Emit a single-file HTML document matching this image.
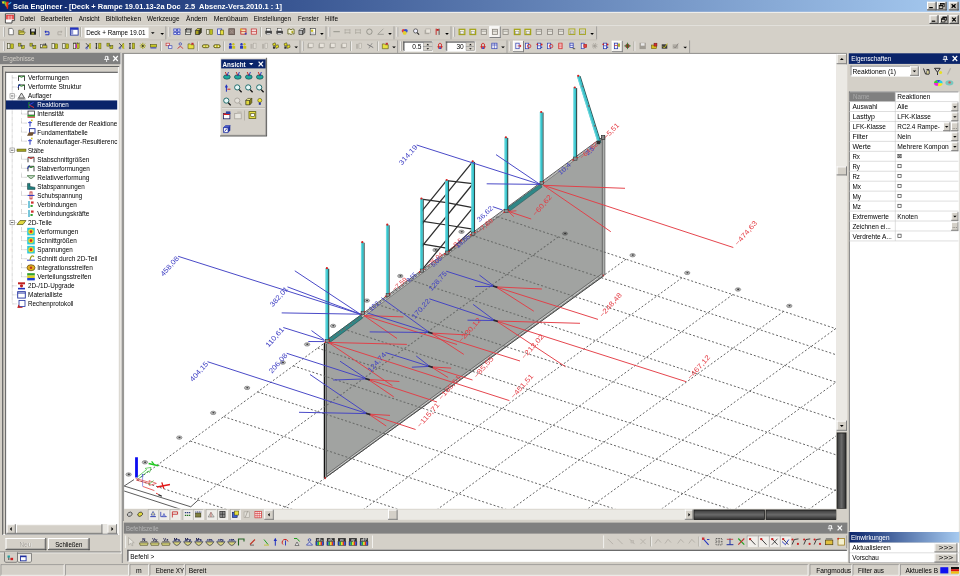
<!DOCTYPE html>
<html lang="de"><head><meta charset="utf-8"><title>Scia Engineer</title>
<style>html,body{margin:0;padding:0;background:#d4d0c8;overflow:hidden}svg{display:block;font-family:"Liberation Sans",sans-serif}text{white-space:pre}</style></head><body>
<svg width="960" height="576" viewBox="0 0 960 576">
<defs><linearGradient id="gt" x1="0" x2="1" y1="0" y2="0"><stop offset="0" stop-color="#0a246a"/><stop offset="1" stop-color="#a6caf0"/></linearGradient><linearGradient id="ge" x1="0" x2="1" y1="0" y2="0"><stop offset="0" stop-color="#0a246a"/><stop offset="1" stop-color="#a6caf0"/></linearGradient><linearGradient id="gd" x1="0" x2="0" y1="0" y2="1"><stop offset="0" stop-color="#3a3a3a"/><stop offset=".5" stop-color="#6a6a6a"/><stop offset="1" stop-color="#2c2c2c"/></linearGradient><linearGradient id="gdv" x1="0" x2="1" y1="0" y2="0"><stop offset="0" stop-color="#3a3a3a"/><stop offset=".5" stop-color="#6a6a6a"/><stop offset="1" stop-color="#2c2c2c"/></linearGradient><filter id="gs" color-interpolation-filters="sRGB" filterUnits="userSpaceOnUse" x="0" y="0" width="960" height="576"><feOffset dx="0" dy="0"/></filter><clipPath id="vp"><rect x="124" y="54" width="712" height="454.5"/></clipPath></defs>
<rect x="0" y="0" width="960" height="576" fill="#d4d0c8"/>
<g filter="url(#gs)">
<rect x="124" y="54" width="712.5" height="455" fill="#fff"/>
<g clip-path="url(#vp)">
<polygon points="325,342 603.4,137 603.6,276 325,478" fill="#a1a3a1"/>
<polygon points="602.3,137.8 604.9,136 604.9,274.4 602.3,276.6" fill="#aeb0ae" stroke="#3a3a3a" stroke-width="0.6"/>
<line x1="325" y1="478" x2="603.6" y2="276" stroke="#2a2a2a" stroke-width="0.9"/>
<line x1="326.5" y1="475.4" x2="602" y2="274.8" stroke="#e4e4e4" stroke-width="0.7"/>
<line x1="326.5" y1="474.4" x2="601.8" y2="273.8" stroke="#4a4a4a" stroke-width="0.6"/>
<line x1="324.4" y1="343" x2="324.4" y2="478" stroke="#111" stroke-width="1.3"/>
<line x1="326.4" y1="343" x2="326.4" y2="476" stroke="#333" stroke-width="0.7"/>
<line x1="325" y1="341.4" x2="603.4" y2="136.4" stroke="#303030" stroke-width="0.8"/>
<line x1="326" y1="343.6" x2="602.4" y2="138.8" stroke="#dcdcdc" stroke-width="0.7"/>
<line x1="326" y1="344.6" x2="602" y2="139.8" stroke="#555" stroke-width="0.5"/>
<polygon points="327.5,339.45 361,314.99 362.5,318.19 328.5,343.45" fill="#2f8787" stroke="#1c4c4c" stroke-width="0.5"/>
<polygon points="507,208.36 540.5,183.9 542,187.1 508,212.36" fill="#2f8787" stroke="#1c4c4c" stroke-width="0.5"/>
<circle cx="325" cy="478.2" r="1" fill="#e02020"/>
<circle cx="603.4" cy="275.4" r="0.9" fill="#c03030"/>
<clipPath id="cw"><polygon points="325,342 603.4,137 603.6,276 325,478"/></clipPath>
<clipPath id="cnw"><path clip-rule="evenodd" d="M0,0 H960 V576 H0 Z M325,342 L603.4,137 L603.6,276 L325,478 Z"/></clipPath>
<g stroke="#5c5c5c" stroke-width="0.95" fill="none" stroke-dasharray="2 2" clip-path="url(#cnw)">
<line x1="137" y1="479.97" x2="836.5" y2="709.41"/>
<line x1="157.5" y1="465" x2="836.5" y2="687.71"/>
<line x1="190.3" y1="441.05" x2="836.5" y2="653"/>
<line x1="223.7" y1="416.66" x2="836.5" y2="617.65"/>
<line x1="257.6" y1="391.9" x2="836.5" y2="581.78"/>
<line x1="293.3" y1="365.83" x2="836.5" y2="544"/>
<line x1="317.6" y1="348.08" x2="836.5" y2="518.28"/>
<line x1="343.6" y1="329.09" x2="836.5" y2="490.76"/>
<line x1="377.4" y1="304.41" x2="836.5" y2="454.99"/>
<line x1="410.8" y1="280.02" x2="836.5" y2="419.65"/>
<line x1="446" y1="254.31" x2="836.5" y2="382.39"/>
<line x1="472" y1="235.32" x2="836.5" y2="354.88"/>
<line x1="497.5" y1="216.7" x2="836.5" y2="328.91"/>
<line x1="497.5" y1="216.7" x2="137" y2="479.97"/>
<line x1="558.3" y1="236.82" x2="196.85" y2="499.6"/>
<line x1="626" y1="259.23" x2="264.74" y2="521.87"/>
<line x1="682" y1="277.77" x2="320.9" y2="540.29"/>
<line x1="732.8" y1="294.58" x2="371.84" y2="557"/>
<line x1="783.6" y1="311.4" x2="422.79" y2="573.71"/>
<line x1="835.7" y1="328.64" x2="475.03" y2="590.85"/>
<line x1="886.5" y1="345.46" x2="525.98" y2="607.56"/>
<line x1="937.3" y1="362.27" x2="576.92" y2="624.27"/>
<line x1="988.1" y1="379.09" x2="627.87" y2="640.98"/>
<line x1="1039" y1="395.94" x2="678.91" y2="657.72"/>
</g>
<g stroke="#6a6c6a" stroke-width="1.05" fill="none" stroke-dasharray="2 2" clip-path="url(#cw)">
<line x1="137" y1="479.97" x2="836.5" y2="709.41"/>
<line x1="157.5" y1="465" x2="836.5" y2="687.71"/>
<line x1="190.3" y1="441.05" x2="836.5" y2="653"/>
<line x1="223.7" y1="416.66" x2="836.5" y2="617.65"/>
<line x1="257.6" y1="391.9" x2="836.5" y2="581.78"/>
<line x1="293.3" y1="365.83" x2="836.5" y2="544"/>
<line x1="317.6" y1="348.08" x2="836.5" y2="518.28"/>
<line x1="343.6" y1="329.09" x2="836.5" y2="490.76"/>
<line x1="377.4" y1="304.41" x2="836.5" y2="454.99"/>
<line x1="410.8" y1="280.02" x2="836.5" y2="419.65"/>
<line x1="446" y1="254.31" x2="836.5" y2="382.39"/>
<line x1="472" y1="235.32" x2="836.5" y2="354.88"/>
<line x1="497.5" y1="216.7" x2="836.5" y2="328.91"/>
<line x1="497.5" y1="216.7" x2="137" y2="479.97"/>
<line x1="558.3" y1="236.82" x2="196.85" y2="499.6"/>
<line x1="626" y1="259.23" x2="264.74" y2="521.87"/>
<line x1="682" y1="277.77" x2="320.9" y2="540.29"/>
<line x1="732.8" y1="294.58" x2="371.84" y2="557"/>
<line x1="783.6" y1="311.4" x2="422.79" y2="573.71"/>
<line x1="835.7" y1="328.64" x2="475.03" y2="590.85"/>
<line x1="886.5" y1="345.46" x2="525.98" y2="607.56"/>
<line x1="937.3" y1="362.27" x2="576.92" y2="624.27"/>
<line x1="988.1" y1="379.09" x2="627.87" y2="640.98"/>
<line x1="1039" y1="395.94" x2="678.91" y2="657.72"/>
</g>
<ellipse cx="128.6" cy="474.5" rx="2.7" ry="1.7" fill="#c4c4c4" stroke="#5a5a5a" stroke-width=".55"/>
<ellipse cx="128.8" cy="474.4" rx="1.1" ry=".8" fill="#3a3a3a"/>
<ellipse cx="144.9" cy="462.3" rx="2.7" ry="1.7" fill="#c4c4c4" stroke="#5a5a5a" stroke-width=".55"/>
<ellipse cx="145.1" cy="462.2" rx="1.1" ry=".8" fill="#3a3a3a"/>
<ellipse cx="179.3" cy="437.6" rx="2.7" ry="1.7" fill="#c4c4c4" stroke="#5a5a5a" stroke-width=".55"/>
<ellipse cx="179.5" cy="437.5" rx="1.1" ry=".8" fill="#3a3a3a"/>
<ellipse cx="213.2" cy="412.9" rx="2.7" ry="1.7" fill="#c4c4c4" stroke="#5a5a5a" stroke-width=".55"/>
<ellipse cx="213.4" cy="412.8" rx="1.1" ry=".8" fill="#3a3a3a"/>
<ellipse cx="247.1" cy="387.9" rx="2.7" ry="1.7" fill="#c4c4c4" stroke="#5a5a5a" stroke-width=".55"/>
<ellipse cx="247.3" cy="387.8" rx="1.1" ry=".8" fill="#3a3a3a"/>
<ellipse cx="282.8" cy="362.6" rx="2.7" ry="1.7" fill="#c4c4c4" stroke="#5a5a5a" stroke-width=".55"/>
<ellipse cx="283" cy="362.5" rx="1.1" ry=".8" fill="#3a3a3a"/>
<ellipse cx="307.1" cy="344.4" rx="2.7" ry="1.7" fill="#c4c4c4" stroke="#5a5a5a" stroke-width=".55"/>
<ellipse cx="307.3" cy="344.3" rx="1.1" ry=".8" fill="#3a3a3a"/>
<ellipse cx="333.1" cy="325.9" rx="2.7" ry="1.7" fill="#c4c4c4" stroke="#5a5a5a" stroke-width=".55"/>
<ellipse cx="333.3" cy="325.8" rx="1.1" ry=".8" fill="#3a3a3a"/>
<ellipse cx="366.9" cy="300.6" rx="2.7" ry="1.7" fill="#c4c4c4" stroke="#5a5a5a" stroke-width=".55"/>
<ellipse cx="367.1" cy="300.5" rx="1.1" ry=".8" fill="#3a3a3a"/>
<ellipse cx="400.3" cy="276" rx="2.7" ry="1.7" fill="#c4c4c4" stroke="#5a5a5a" stroke-width=".55"/>
<ellipse cx="400.5" cy="275.9" rx="1.1" ry=".8" fill="#3a3a3a"/>
<ellipse cx="435.5" cy="250" rx="2.7" ry="1.7" fill="#c4c4c4" stroke="#5a5a5a" stroke-width=".55"/>
<ellipse cx="435.7" cy="249.9" rx="1.1" ry=".8" fill="#3a3a3a"/>
<ellipse cx="461.5" cy="231.8" rx="2.7" ry="1.7" fill="#c4c4c4" stroke="#5a5a5a" stroke-width=".55"/>
<ellipse cx="461.7" cy="231.7" rx="1.1" ry=".8" fill="#3a3a3a"/>
<ellipse cx="565" cy="233.6" rx="2.6" ry="1.6" fill="#7c7e7c" stroke="#505050" stroke-width=".5"/>
<ellipse cx="565.2" cy="233.5" rx="1.2" ry=".8" fill="#333"/>
<ellipse cx="632.6" cy="255.2" rx="2.7" ry="1.7" fill="#c4c4c4" stroke="#5a5a5a" stroke-width=".55"/>
<ellipse cx="632.8" cy="255.1" rx="1.1" ry=".8" fill="#3a3a3a"/>
<ellipse cx="687.2" cy="272.9" rx="2.7" ry="1.7" fill="#c4c4c4" stroke="#5a5a5a" stroke-width=".55"/>
<ellipse cx="687.4" cy="272.8" rx="1.1" ry=".8" fill="#3a3a3a"/>
<ellipse cx="738" cy="289.5" rx="2.7" ry="1.7" fill="#c4c4c4" stroke="#5a5a5a" stroke-width=".55"/>
<ellipse cx="738.2" cy="289.4" rx="1.1" ry=".8" fill="#3a3a3a"/>
<ellipse cx="789.3" cy="305.9" rx="2.7" ry="1.7" fill="#c4c4c4" stroke="#5a5a5a" stroke-width=".55"/>
<ellipse cx="789.5" cy="305.8" rx="1.1" ry=".8" fill="#3a3a3a"/>
<polyline points="446.7,180.6 472.7,183.6" fill="none" stroke="#2c2c2c" stroke-width="1.25"/>
<polyline points="421.4,199.2 446.7,202.6 472.7,207.6" fill="none" stroke="#2c2c2c" stroke-width="1.25"/>
<polyline points="421.4,221.2 446.7,225 472.7,229.2" fill="none" stroke="#2c2c2c" stroke-width="1.25"/>
<polyline points="421.4,243.8 446.7,248.2" fill="none" stroke="#2c2c2c" stroke-width="1.25"/>
<line x1="472.7" y1="161.6" x2="421.4" y2="224.6" stroke="#2c2c2c" stroke-width="1.25"/>
<line x1="472.7" y1="184" x2="421.4" y2="247.2" stroke="#2c2c2c" stroke-width="1.25"/>
<line x1="472.7" y1="207.8" x2="421.4" y2="270.6" stroke="#2c2c2c" stroke-width="1.25"/>
<line x1="446.7" y1="180.4" x2="421.4" y2="211.6" stroke="#2c2c2c" stroke-width="1.25"/>
<line x1="472.7" y1="229.4" x2="446.7" y2="253.4" stroke="#2c2c2c" stroke-width="1.25"/>
<line x1="328.6" y1="268.8" x2="328.6" y2="342" stroke="#33403f" stroke-width="1.3"/>
<line x1="326.9" y1="268.2" x2="326.9" y2="342" stroke="#36c4cc" stroke-width="2.7"/>
<line x1="326.1" y1="268.2" x2="326.1" y2="342" stroke="#7fe4e8" stroke-width="0.7"/>
<circle cx="326.9" cy="268.2" r="1.1" fill="#d82020"/>
<rect x="325.7" y="339.4" width="3.4" height="3.2" fill="#8c9090" stroke="#2a2a2a" stroke-width="0.5"/>
<circle cx="325.1" cy="342.3" r="0.8" fill="#d82020"/>
<circle cx="329.3" cy="339.8" r="0.7" fill="#d82020"/>
<line x1="364" y1="242.8" x2="364" y2="313.8" stroke="#33403f" stroke-width="1.3"/>
<line x1="362.3" y1="242.2" x2="362.3" y2="313.8" stroke="#36c4cc" stroke-width="2.7"/>
<line x1="361.5" y1="242.2" x2="361.5" y2="313.8" stroke="#7fe4e8" stroke-width="0.7"/>
<circle cx="362.3" cy="242.2" r="1.1" fill="#d82020"/>
<rect x="361.1" y="311.2" width="3.4" height="3.2" fill="#8c9090" stroke="#2a2a2a" stroke-width="0.5"/>
<circle cx="360.5" cy="314.1" r="0.8" fill="#d82020"/>
<circle cx="364.7" cy="311.6" r="0.7" fill="#d82020"/>
<line x1="389" y1="225.3" x2="389" y2="296" stroke="#33403f" stroke-width="1.3"/>
<line x1="387.3" y1="224.7" x2="387.3" y2="296" stroke="#36c4cc" stroke-width="2.7"/>
<line x1="386.5" y1="224.7" x2="386.5" y2="296" stroke="#7fe4e8" stroke-width="0.7"/>
<circle cx="387.3" cy="224.7" r="1.1" fill="#d82020"/>
<rect x="386.1" y="293.4" width="3.4" height="3.2" fill="#8c9090" stroke="#2a2a2a" stroke-width="0.5"/>
<circle cx="385.5" cy="296.3" r="0.8" fill="#d82020"/>
<circle cx="389.7" cy="293.8" r="0.7" fill="#d82020"/>
<line x1="423.1" y1="199.2" x2="423.1" y2="271.6" stroke="#33403f" stroke-width="1.3"/>
<line x1="421.4" y1="198.6" x2="421.4" y2="271.6" stroke="#36c4cc" stroke-width="2.7"/>
<line x1="420.6" y1="198.6" x2="420.6" y2="271.6" stroke="#7fe4e8" stroke-width="0.7"/>
<circle cx="421.4" cy="198.6" r="1.1" fill="#d82020"/>
<rect x="420.2" y="269" width="3.4" height="3.2" fill="#8c9090" stroke="#2a2a2a" stroke-width="0.5"/>
<circle cx="419.6" cy="271.9" r="0.8" fill="#d82020"/>
<circle cx="423.8" cy="269.4" r="0.7" fill="#d82020"/>
<line x1="448.4" y1="180.6" x2="448.4" y2="253.6" stroke="#33403f" stroke-width="1.3"/>
<line x1="446.7" y1="180" x2="446.7" y2="253.6" stroke="#36c4cc" stroke-width="2.7"/>
<line x1="445.9" y1="180" x2="445.9" y2="253.6" stroke="#7fe4e8" stroke-width="0.7"/>
<circle cx="446.7" cy="180" r="1.1" fill="#d82020"/>
<rect x="445.5" y="251" width="3.4" height="3.2" fill="#8c9090" stroke="#2a2a2a" stroke-width="0.5"/>
<circle cx="444.9" cy="253.9" r="0.8" fill="#d82020"/>
<circle cx="449.1" cy="251.4" r="0.7" fill="#d82020"/>
<line x1="474.4" y1="161.9" x2="474.4" y2="234.6" stroke="#33403f" stroke-width="1.3"/>
<line x1="472.7" y1="161.3" x2="472.7" y2="234.6" stroke="#36c4cc" stroke-width="2.7"/>
<line x1="471.9" y1="161.3" x2="471.9" y2="234.6" stroke="#7fe4e8" stroke-width="0.7"/>
<circle cx="472.7" cy="161.3" r="1.1" fill="#d82020"/>
<rect x="471.5" y="232" width="3.4" height="3.2" fill="#8c9090" stroke="#2a2a2a" stroke-width="0.5"/>
<circle cx="470.9" cy="234.9" r="0.8" fill="#d82020"/>
<circle cx="475.1" cy="232.4" r="0.7" fill="#d82020"/>
<line x1="507.6" y1="137.9" x2="507.6" y2="212" stroke="#33403f" stroke-width="1.3"/>
<line x1="505.9" y1="137.3" x2="505.9" y2="212" stroke="#36c4cc" stroke-width="2.7"/>
<line x1="505.1" y1="137.3" x2="505.1" y2="212" stroke="#7fe4e8" stroke-width="0.7"/>
<circle cx="505.9" cy="137.3" r="1.1" fill="#d82020"/>
<rect x="504.7" y="209.4" width="3.4" height="3.2" fill="#8c9090" stroke="#2a2a2a" stroke-width="0.5"/>
<circle cx="504.1" cy="212.3" r="0.8" fill="#d82020"/>
<circle cx="508.3" cy="209.8" r="0.7" fill="#d82020"/>
<line x1="542.9" y1="112.6" x2="542.9" y2="184" stroke="#33403f" stroke-width="1.3"/>
<line x1="541.2" y1="112" x2="541.2" y2="184" stroke="#36c4cc" stroke-width="2.7"/>
<line x1="540.4" y1="112" x2="540.4" y2="184" stroke="#7fe4e8" stroke-width="0.7"/>
<circle cx="541.2" cy="112" r="1.1" fill="#d82020"/>
<rect x="540" y="181.4" width="3.4" height="3.2" fill="#8c9090" stroke="#2a2a2a" stroke-width="0.5"/>
<circle cx="539.4" cy="184.3" r="0.8" fill="#d82020"/>
<circle cx="543.6" cy="181.8" r="0.7" fill="#d82020"/>
<line x1="576.5" y1="88.1" x2="576.5" y2="159.6" stroke="#33403f" stroke-width="1.3"/>
<line x1="574.8" y1="87.5" x2="574.8" y2="159.6" stroke="#36c4cc" stroke-width="2.7"/>
<line x1="574" y1="87.5" x2="574" y2="159.6" stroke="#7fe4e8" stroke-width="0.7"/>
<circle cx="574.8" cy="87.5" r="1.1" fill="#d82020"/>
<rect x="573.6" y="157" width="3.4" height="3.2" fill="#8c9090" stroke="#2a2a2a" stroke-width="0.5"/>
<circle cx="573" cy="159.9" r="0.8" fill="#d82020"/>
<circle cx="577.2" cy="157.4" r="0.7" fill="#d82020"/>
<line x1="580" y1="76.2" x2="600.8" y2="142.8" stroke="#2a5050" stroke-width="1.2"/>
<line x1="578.3" y1="76" x2="599.1" y2="142.6" stroke="#38c0c8" stroke-width="2.8"/>
<line x1="577.5" y1="76.4" x2="598.3" y2="143" stroke="#7fe0e4" stroke-width="0.7"/>
<circle cx="578.2" cy="75.8" r="1.1" fill="#d82020"/>
<circle cx="582.22" cy="85.99" r="0.6" fill="#c02828"/>
<circle cx="588.46" cy="105.97" r="0.6" fill="#c02828"/>
<circle cx="594.7" cy="125.95" r="0.6" fill="#c02828"/>
<rect x="596.6" y="140.6" width="3.6" height="3.6" fill="#333"/>
<rect x="601.4" y="135.4" width="3.4" height="4" fill="#8a8a8a" stroke="#222" stroke-width="0.6"/>
<line x1="283.3" y1="327.5" x2="324.5" y2="340.4" stroke="#4040c4" stroke-width="0.95"/>
<line x1="311.5" y1="330.6" x2="324.5" y2="340" stroke="#4040c4" stroke-width="0.95"/>
<line x1="308.3" y1="341.5" x2="324.5" y2="341.6" stroke="#4040c4" stroke-width="0.95"/>
<text x="284.5" y="329.9" font-size="7" fill="#4040c4" textLength="24" lengthAdjust="spacingAndGlyphs" text-anchor="end" transform="rotate(-48.5 284.5 329.9)">110,61</text>
<line x1="328.4" y1="342.4" x2="406.9" y2="344.4" stroke="#e43c44" stroke-width="0.95"/>
<line x1="328.4" y1="342.4" x2="509.4" y2="400.6" stroke="#e43c44" stroke-width="0.95"/>
<line x1="328.4" y1="342.4" x2="392.5" y2="385.8" stroke="#e43c44" stroke-width="0.95"/>
<text x="513.8" y="399" font-size="7" fill="#e43c44" textLength="30.1" lengthAdjust="spacingAndGlyphs" transform="rotate(-48.5 513.8 399)">−451,51</text>
<line x1="178.1" y1="256.3" x2="360.4" y2="314.2" stroke="#4040c4" stroke-width="0.95"/>
<line x1="287.5" y1="286.9" x2="360.4" y2="314.2" stroke="#4040c4" stroke-width="0.95"/>
<line x1="294.8" y1="270.8" x2="360.4" y2="314.2" stroke="#4040c4" stroke-width="0.95"/>
<line x1="281.7" y1="312.9" x2="360.4" y2="314.2" stroke="#4040c4" stroke-width="0.95"/>
<text x="179.3" y="258.7" font-size="7" fill="#4040c4" textLength="24" lengthAdjust="spacingAndGlyphs" text-anchor="end" transform="rotate(-48.5 179.3 258.7)">458,08</text>
<text x="288.7" y="289.3" font-size="7" fill="#4040c4" textLength="24" lengthAdjust="spacingAndGlyphs" text-anchor="end" transform="rotate(-48.5 288.7 289.3)">382,01</text>
<line x1="364" y1="315.6" x2="403.4" y2="316.9" stroke="#e43c44" stroke-width="0.95"/>
<line x1="364" y1="315.6" x2="457" y2="344.5" stroke="#e43c44" stroke-width="0.95"/>
<line x1="364" y1="315.6" x2="397" y2="338.5" stroke="#e43c44" stroke-width="0.95"/>
<text x="461.4" y="342.9" font-size="7" fill="#e43c44" textLength="30.1" lengthAdjust="spacingAndGlyphs" transform="rotate(-48.5 461.4 342.9)">−230,12</text>
<line x1="416.7" y1="145" x2="540" y2="184.4" stroke="#4040c4" stroke-width="0.95"/>
<line x1="496" y1="154.6" x2="540" y2="184.4" stroke="#4040c4" stroke-width="0.95"/>
<line x1="486.7" y1="183.8" x2="540" y2="184.4" stroke="#4040c4" stroke-width="0.95"/>
<text x="417.9" y="147.4" font-size="7" fill="#4040c4" textLength="24" lengthAdjust="spacingAndGlyphs" text-anchor="end" transform="rotate(-48.5 417.9 147.4)">314,19</text>
<line x1="543.4" y1="185.3" x2="625" y2="188.3" stroke="#e43c44" stroke-width="0.95"/>
<line x1="543.4" y1="185.3" x2="733.3" y2="247.5" stroke="#e43c44" stroke-width="0.95"/>
<line x1="543.4" y1="185.3" x2="610.8" y2="231.7" stroke="#e43c44" stroke-width="0.95"/>
<text x="737.7" y="245.9" font-size="7" fill="#e43c44" textLength="30.1" lengthAdjust="spacingAndGlyphs" transform="rotate(-48.5 737.7 245.9)">−474,63</text>
<line x1="286.7" y1="353.3" x2="366.6" y2="378.9" stroke="#4040c4" stroke-width="0.95"/>
<line x1="340" y1="361.2" x2="366.6" y2="378.9" stroke="#4040c4" stroke-width="0.95"/>
<line x1="333.1" y1="380" x2="366.6" y2="378.9" stroke="#4040c4" stroke-width="0.95"/>
<text x="287.9" y="355.7" font-size="7" fill="#4040c4" textLength="24" lengthAdjust="spacingAndGlyphs" text-anchor="end" transform="rotate(-48.5 287.9 355.7)">206,08</text>
<line x1="368.1" y1="379.4" x2="399.4" y2="381.5" stroke="#e43c44" stroke-width="0.95"/>
<line x1="368.1" y1="379.4" x2="437" y2="402" stroke="#e43c44" stroke-width="0.95"/>
<line x1="368.1" y1="379.4" x2="393.8" y2="396.9" stroke="#e43c44" stroke-width="0.95"/>
<text x="441.4" y="400.4" font-size="7" fill="#e43c44" textLength="30.1" lengthAdjust="spacingAndGlyphs" transform="rotate(-48.5 441.4 400.4)">−165,51</text>
<line x1="365.3" y1="378.5" x2="369.7" y2="379.9" stroke="#262630" stroke-width="1.7"/>
<line x1="207.5" y1="361.7" x2="367.2" y2="413.6" stroke="#4040c4" stroke-width="0.95"/>
<line x1="310" y1="374.5" x2="367.2" y2="413.6" stroke="#4040c4" stroke-width="0.95"/>
<line x1="299" y1="412.3" x2="367.2" y2="413.6" stroke="#4040c4" stroke-width="0.95"/>
<text x="208.7" y="364.1" font-size="7" fill="#4040c4" textLength="24" lengthAdjust="spacingAndGlyphs" text-anchor="end" transform="rotate(-48.5 208.7 364.1)">404,15</text>
<line x1="368.7" y1="414.1" x2="390" y2="415.4" stroke="#e43c44" stroke-width="0.95"/>
<line x1="368.7" y1="414.1" x2="415.6" y2="429.5" stroke="#e43c44" stroke-width="0.95"/>
<line x1="368.7" y1="414.1" x2="386.2" y2="426" stroke="#e43c44" stroke-width="0.95"/>
<text x="420" y="427.9" font-size="7" fill="#e43c44" textLength="30.1" lengthAdjust="spacingAndGlyphs" transform="rotate(-48.5 420 427.9)">−115,71</text>
<line x1="365.9" y1="413.2" x2="370.3" y2="414.6" stroke="#262630" stroke-width="1.7"/>
<line x1="367.8" y1="313.1" x2="429.5" y2="332.5" stroke="#4040c4" stroke-width="0.95"/>
<line x1="381.4" y1="297.7" x2="429.5" y2="332.5" stroke="#4040c4" stroke-width="0.95"/>
<line x1="369.7" y1="331.9" x2="429.5" y2="332.5" stroke="#4040c4" stroke-width="0.95"/>
<line x1="431" y1="333" x2="468" y2="335" stroke="#e43c44" stroke-width="0.95"/>
<line x1="431" y1="333" x2="520" y2="361" stroke="#e43c44" stroke-width="0.95"/>
<line x1="431" y1="333" x2="463.8" y2="354.4" stroke="#e43c44" stroke-width="0.95"/>
<text x="524.4" y="359.4" font-size="7" fill="#e43c44" textLength="30.1" lengthAdjust="spacingAndGlyphs" transform="rotate(-48.5 524.4 359.4)">−213,02</text>
<line x1="428.2" y1="332.1" x2="432.6" y2="333.5" stroke="#262630" stroke-width="1.7"/>
<line x1="385.4" y1="352.5" x2="429.7" y2="366.4" stroke="#4040c4" stroke-width="0.95"/>
<line x1="416.2" y1="356" x2="429.7" y2="366.4" stroke="#4040c4" stroke-width="0.95"/>
<line x1="411.9" y1="367.2" x2="429.7" y2="366.4" stroke="#4040c4" stroke-width="0.95"/>
<text x="386.6" y="354.9" font-size="7" fill="#4040c4" textLength="24" lengthAdjust="spacingAndGlyphs" text-anchor="end" transform="rotate(-48.5 386.6 354.9)">124,74</text>
<line x1="431.2" y1="366.9" x2="451.2" y2="368.1" stroke="#e43c44" stroke-width="0.95"/>
<line x1="431.2" y1="366.9" x2="472.5" y2="380" stroke="#e43c44" stroke-width="0.95"/>
<line x1="431.2" y1="366.9" x2="448.1" y2="377.5" stroke="#e43c44" stroke-width="0.95"/>
<text x="476.9" y="378.4" font-size="7" fill="#e43c44" textLength="25.8" lengthAdjust="spacingAndGlyphs" transform="rotate(-48.5 476.9 378.4)">−85,55</text>
<line x1="428.4" y1="366" x2="432.8" y2="367.4" stroke="#262630" stroke-width="1.7"/>
<line x1="446.2" y1="271.2" x2="494.3" y2="286.4" stroke="#4040c4" stroke-width="0.95"/>
<line x1="479.4" y1="275" x2="494.3" y2="286.4" stroke="#4040c4" stroke-width="0.95"/>
<line x1="475" y1="286.5" x2="494.3" y2="286.4" stroke="#4040c4" stroke-width="0.95"/>
<text x="447.4" y="273.6" font-size="7" fill="#4040c4" textLength="24" lengthAdjust="spacingAndGlyphs" text-anchor="end" transform="rotate(-48.5 447.4 273.6)">128,75</text>
<line x1="495.8" y1="286.9" x2="541.9" y2="289" stroke="#e43c44" stroke-width="0.95"/>
<line x1="495.8" y1="286.9" x2="598" y2="319.4" stroke="#e43c44" stroke-width="0.95"/>
<line x1="495.8" y1="286.9" x2="533.8" y2="311.2" stroke="#e43c44" stroke-width="0.95"/>
<text x="602.4" y="317.8" font-size="7" fill="#e43c44" textLength="30.1" lengthAdjust="spacingAndGlyphs" transform="rotate(-48.5 602.4 317.8)">−248,48</text>
<line x1="493" y1="286" x2="497.4" y2="287.4" stroke="#262630" stroke-width="1.7"/>
<line x1="429.4" y1="298.8" x2="494.8" y2="320.5" stroke="#4040c4" stroke-width="0.95"/>
<line x1="473.1" y1="304.4" x2="494.8" y2="320.5" stroke="#4040c4" stroke-width="0.95"/>
<line x1="467.5" y1="320.2" x2="494.8" y2="320.5" stroke="#4040c4" stroke-width="0.95"/>
<text x="430.6" y="301.2" font-size="7" fill="#4040c4" textLength="24" lengthAdjust="spacingAndGlyphs" text-anchor="end" transform="rotate(-48.5 430.6 301.2)">170,22</text>
<line x1="496.3" y1="321" x2="580" y2="323.3" stroke="#e43c44" stroke-width="0.95"/>
<line x1="496.3" y1="321" x2="686.2" y2="381.7" stroke="#e43c44" stroke-width="0.95"/>
<line x1="496.3" y1="321" x2="565.4" y2="366.7" stroke="#e43c44" stroke-width="0.95"/>
<text x="690.6" y="380.1" font-size="7" fill="#e43c44" textLength="30.1" lengthAdjust="spacingAndGlyphs" transform="rotate(-48.5 690.6 380.1)">−467,12</text>
<line x1="493.5" y1="320.1" x2="497.9" y2="321.5" stroke="#262630" stroke-width="1.7"/>
<text x="371.2" y="311.6" font-size="6.6" fill="#4040c4" textLength="13.5" lengthAdjust="spacingAndGlyphs" transform="rotate(-42 371.2 311.6)">102,</text>
<text x="394.8" y="291.6" font-size="6.6" fill="#e43c44" textLength="17" lengthAdjust="spacingAndGlyphs" transform="rotate(-42 394.8 291.6)">−7,59</text>
<text x="409" y="282.8" font-size="6.6" fill="#4040c4" textLength="11" lengthAdjust="spacingAndGlyphs" transform="rotate(-42 409 282.8)">9,55</text>
<text x="428.6" y="268.6" font-size="6.6" fill="#e43c44" textLength="20" lengthAdjust="spacingAndGlyphs" transform="rotate(-42 428.6 268.6)">−75,04</text>
<text x="433.5" y="267.2" font-size="6.6" fill="#4040c4" textLength="12" lengthAdjust="spacingAndGlyphs" transform="rotate(-42 433.5 267.2)">5,05</text>
<text x="452.6" y="250.2" font-size="6.6" fill="#e43c44" textLength="14" lengthAdjust="spacingAndGlyphs" transform="rotate(-42 452.6 250.2)">−9,5</text>
<text x="458" y="248.6" font-size="6.6" fill="#4040c4" textLength="17" lengthAdjust="spacingAndGlyphs" transform="rotate(-42 458 248.6)">15,55</text>
<text x="479.4" y="233.8" font-size="6.6" fill="#e43c44" textLength="19" lengthAdjust="spacingAndGlyphs" transform="rotate(-42 479.4 233.8)">−7,69</text>
<line x1="492.8" y1="206.7" x2="502.4" y2="210" stroke="#4040c4" stroke-width="0.95"/>
<text x="493.6" y="208.8" font-size="6.8" fill="#4040c4" textLength="19.5" lengthAdjust="spacingAndGlyphs" text-anchor="end" transform="rotate(-44 493.6 208.8)">36,62</text>
<line x1="508.4" y1="211.4" x2="531.2" y2="219" stroke="#e43c44" stroke-width="0.95"/>
<line x1="508.4" y1="211.4" x2="516.4" y2="210.8" stroke="#e43c44" stroke-width="0.95"/>
<line x1="508.4" y1="211.4" x2="513.8" y2="216.6" stroke="#e43c44" stroke-width="0.95"/>
<text x="535.6" y="216.6" font-size="7" fill="#e43c44" textLength="25.5" lengthAdjust="spacingAndGlyphs" transform="rotate(-49 535.6 216.6)">−60,62</text>
<text x="560.6" y="175.2" font-size="6.6" fill="#4040c4" textLength="14.5" lengthAdjust="spacingAndGlyphs" transform="rotate(-42 560.6 175.2)">10,4</text>
<text x="582.2" y="159.6" font-size="6.6" fill="#e43c44" textLength="22" lengthAdjust="spacingAndGlyphs" transform="rotate(-42 582.2 159.6)">−64,62</text>
<text x="588" y="155.4" font-size="6.6" fill="#4040c4" textLength="9" lengthAdjust="spacingAndGlyphs" transform="rotate(-42 588 155.4)">2,5</text>
<text x="606.4" y="139.4" font-size="7" fill="#e43c44" textLength="19" lengthAdjust="spacingAndGlyphs" transform="rotate(-46 606.4 139.4)">−5,51</text>
<line x1="124.2" y1="486" x2="190.8" y2="506.8" stroke="#333" stroke-width="0.8"/>
<line x1="124.2" y1="491" x2="184" y2="510.4" stroke="#333" stroke-width="0.8"/>
<line x1="190.8" y1="506.8" x2="198.2" y2="500" stroke="#333" stroke-width="0.8"/>
<line x1="124.2" y1="486" x2="134" y2="479.6" stroke="#333" stroke-width="0.8"/>
<line x1="136.5" y1="457.2" x2="136.5" y2="477.6" stroke="#0c0cf0" stroke-width="2.8"/>
<polyline points="137.4,477 146.6,469.6 145.2,468.4 151,467.4 149.6,472.4 148.2,471 139,478.4" fill="none" stroke="#30c030" stroke-width="0.7"/>
<line x1="148.6" y1="463.4" x2="158.4" y2="465.8" stroke="#20c820" stroke-width="1.5"/>
<line x1="151.6" y1="461.4" x2="154.4" y2="464.8" stroke="#20c820" stroke-width="1.3"/>
<line x1="142.6" y1="474" x2="142.6" y2="486.6" stroke="#8080e0" stroke-width="0.8"/>
<text x="141.6" y="476.6" font-size="4.5" fill="#4040d0">z</text>
<polyline points="135.6,478.4 149.6,482.4 149,480.6 156.4,483.4 149.4,485.4 149.6,483.8 136,480" fill="none" stroke="#e04040" stroke-width="0.7"/>
<line x1="148.4" y1="484.6" x2="153.6" y2="480.6" stroke="#30c030" stroke-width="0.7"/>
<line x1="143" y1="486.5" x2="154.4" y2="490.6" stroke="#e04040" stroke-width="0.8"/>
<line x1="157" y1="487" x2="170" y2="484.4" stroke="#e01818" stroke-width="1.5"/>
<line x1="161.8" y1="482.4" x2="163.8" y2="488.6" stroke="#e01818" stroke-width="1.3"/>
<line x1="156" y1="493.2" x2="158.6" y2="494.4" stroke="#e04040" stroke-width="1"/>
<line x1="158.4" y1="494.6" x2="161.8" y2="496.2" stroke="#222" stroke-width="1.2"/>
</g>
<rect x="0" y="0" width="960" height="12" fill="url(#gt)"/>
<polygon points="1.7,1.4 4.4,1.2 5,3.6 2.6,3.8" fill="#e8d820"/>
<polygon points="3.8,1.3 6.2,1.6 6.6,6 5,5.4" fill="#40c040"/>
<polygon points="5.2,2.6 7,2.6 7.4,7.6 5.8,6.6" fill="#f0a010"/>
<polygon points="6.4,1.8 8.8,1.8 8,9 6.6,8.6" fill="#e02818"/>
<polygon points="8.2,3.6 11.2,1.8 11.3,3 8.4,5" fill="#40b0f0"/>
<text x="13" y="8.9" font-size="7.5" fill="#fff" textLength="269" lengthAdjust="spacingAndGlyphs" font-weight="bold">Scia Engineer - [Deck + Rampe 19.01.13-2a Doc  2.5  Absenz-Vers.2010.1 : 1]</text>
<rect x="927" y="1.8" width="9.6" height="8.6" fill="#d4d0c8"/>
<line x1="927" y1="2.3" x2="936.6" y2="2.3" stroke="#ffffff" stroke-width="1"/>
<line x1="927.5" y1="1.8" x2="927.5" y2="10.4" stroke="#ffffff" stroke-width="1"/>
<line x1="927" y1="9.9" x2="936.6" y2="9.9" stroke="#404040" stroke-width="1"/>
<line x1="936.1" y1="1.8" x2="936.1" y2="10.4" stroke="#404040" stroke-width="1"/>
<line x1="928" y1="9.1" x2="935.6" y2="9.1" stroke="#808080" stroke-width="0.7"/>
<line x1="935.3" y1="2.8" x2="935.3" y2="9.4" stroke="#808080" stroke-width="0.7"/>
<rect x="929.2" y="7" width="3.6" height="1.2" fill="#000"/>
<rect x="937" y="1.8" width="9.6" height="8.6" fill="#d4d0c8"/>
<line x1="937" y1="2.3" x2="946.6" y2="2.3" stroke="#ffffff" stroke-width="1"/>
<line x1="937.5" y1="1.8" x2="937.5" y2="10.4" stroke="#ffffff" stroke-width="1"/>
<line x1="937" y1="9.9" x2="946.6" y2="9.9" stroke="#404040" stroke-width="1"/>
<line x1="946.1" y1="1.8" x2="946.1" y2="10.4" stroke="#404040" stroke-width="1"/>
<line x1="938" y1="9.1" x2="945.6" y2="9.1" stroke="#808080" stroke-width="0.7"/>
<line x1="945.3" y1="2.8" x2="945.3" y2="9.4" stroke="#808080" stroke-width="0.7"/>
<rect x="940.6" y="3.6" width="3.6" height="3.2" fill="none" stroke="#000" stroke-width="0.7"/>
<line x1="940.6" y1="4" x2="944.2" y2="4" stroke="#000" stroke-width="1"/>
<rect x="939.2" y="5.4" width="3.6" height="3.2" fill="#d4d0c8" stroke="#000" stroke-width="0.7"/>
<line x1="939.2" y1="5.8" x2="942.8" y2="5.8" stroke="#000" stroke-width="1"/>
<rect x="948.8" y="1.8" width="9.8" height="8.6" fill="#d4d0c8"/>
<line x1="948.8" y1="2.3" x2="958.6" y2="2.3" stroke="#ffffff" stroke-width="1"/>
<line x1="949.3" y1="1.8" x2="949.3" y2="10.4" stroke="#ffffff" stroke-width="1"/>
<line x1="948.8" y1="9.9" x2="958.6" y2="9.9" stroke="#404040" stroke-width="1"/>
<line x1="958.1" y1="1.8" x2="958.1" y2="10.4" stroke="#404040" stroke-width="1"/>
<line x1="949.8" y1="9.1" x2="957.6" y2="9.1" stroke="#808080" stroke-width="0.7"/>
<line x1="957.3" y1="2.8" x2="957.3" y2="9.4" stroke="#808080" stroke-width="0.7"/>
<line x1="951.6" y1="4.2" x2="955.6" y2="7.8" stroke="#000" stroke-width="1.3"/>
<line x1="955.6" y1="4.2" x2="951.6" y2="7.8" stroke="#000" stroke-width="1.3"/>
<line x1="0" y1="12.3" x2="960" y2="12.3" stroke="#fff" stroke-width="0.8"/>
<polygon points="5.4,13.8 14.6,13.8 14.6,20.6 12,20.6 12,23 5.4,23" fill="#fff" stroke="#404040" stroke-width="0.9"/>
<rect x="6.2" y="14.8" width="7.6" height="4.6" fill="#e02828"/>
<line x1="8.2" y1="15.6" x2="8.2" y2="19.8" stroke="#fff" stroke-width="0.8"/>
<line x1="10" y1="15.6" x2="10" y2="19.8" stroke="#fff" stroke-width="0.8"/>
<line x1="11.8" y1="15.6" x2="11.8" y2="19.8" stroke="#fff" stroke-width="0.8"/>
<text x="20" y="21.4" font-size="6.7" fill="#000" textLength="15" lengthAdjust="spacingAndGlyphs">Datei</text>
<text x="41" y="21.4" font-size="6.7" fill="#000" textLength="31.5" lengthAdjust="spacingAndGlyphs">Bearbeiten</text>
<text x="78.8" y="21.4" font-size="6.7" fill="#000" textLength="20.7" lengthAdjust="spacingAndGlyphs">Ansicht</text>
<text x="105.8" y="21.4" font-size="6.7" fill="#000" textLength="35.2" lengthAdjust="spacingAndGlyphs">Bibliotheken</text>
<text x="147" y="21.4" font-size="6.7" fill="#000" textLength="32.5" lengthAdjust="spacingAndGlyphs">Werkzeuge</text>
<text x="186" y="21.4" font-size="6.7" fill="#000" textLength="21.5" lengthAdjust="spacingAndGlyphs">Ändern</text>
<text x="213.8" y="21.4" font-size="6.7" fill="#000" textLength="34.2" lengthAdjust="spacingAndGlyphs">Menübaum</text>
<text x="253.8" y="21.4" font-size="6.7" fill="#000" textLength="37.2" lengthAdjust="spacingAndGlyphs">Einstellungen</text>
<text x="298" y="21.4" font-size="6.7" fill="#000" textLength="20.8" lengthAdjust="spacingAndGlyphs">Fenster</text>
<text x="325" y="21.4" font-size="6.7" fill="#000" textLength="13" lengthAdjust="spacingAndGlyphs">Hilfe</text>
<rect x="929.5" y="15.2" width="9" height="8.8" fill="#d4d0c8"/>
<line x1="929.5" y1="15.7" x2="938.5" y2="15.7" stroke="#ffffff" stroke-width="1"/>
<line x1="930" y1="15.2" x2="930" y2="24" stroke="#ffffff" stroke-width="1"/>
<line x1="929.5" y1="23.5" x2="938.5" y2="23.5" stroke="#404040" stroke-width="1"/>
<line x1="938" y1="15.2" x2="938" y2="24" stroke="#404040" stroke-width="1"/>
<line x1="930.5" y1="22.7" x2="937.5" y2="22.7" stroke="#808080" stroke-width="0.7"/>
<line x1="937.2" y1="16.2" x2="937.2" y2="23" stroke="#808080" stroke-width="0.7"/>
<rect x="931.7" y="20.6" width="3.6" height="1.2" fill="#000"/>
<rect x="939.2" y="15.2" width="9.2" height="8.8" fill="#d4d0c8"/>
<line x1="939.2" y1="15.7" x2="948.4" y2="15.7" stroke="#ffffff" stroke-width="1"/>
<line x1="939.7" y1="15.2" x2="939.7" y2="24" stroke="#ffffff" stroke-width="1"/>
<line x1="939.2" y1="23.5" x2="948.4" y2="23.5" stroke="#404040" stroke-width="1"/>
<line x1="947.9" y1="15.2" x2="947.9" y2="24" stroke="#404040" stroke-width="1"/>
<line x1="940.2" y1="22.7" x2="947.4" y2="22.7" stroke="#808080" stroke-width="0.7"/>
<line x1="947.1" y1="16.2" x2="947.1" y2="23" stroke="#808080" stroke-width="0.7"/>
<rect x="942.8" y="17" width="3.6" height="3.2" fill="none" stroke="#000" stroke-width="0.7"/>
<line x1="942.8" y1="17.4" x2="946.4" y2="17.4" stroke="#000" stroke-width="1"/>
<rect x="941.4" y="18.8" width="3.6" height="3.2" fill="#d4d0c8" stroke="#000" stroke-width="0.7"/>
<line x1="941.4" y1="19.2" x2="945" y2="19.2" stroke="#000" stroke-width="1"/>
<rect x="949.4" y="15.2" width="9.4" height="8.8" fill="#d4d0c8"/>
<line x1="949.4" y1="15.7" x2="958.8" y2="15.7" stroke="#ffffff" stroke-width="1"/>
<line x1="949.9" y1="15.2" x2="949.9" y2="24" stroke="#ffffff" stroke-width="1"/>
<line x1="949.4" y1="23.5" x2="958.8" y2="23.5" stroke="#404040" stroke-width="1"/>
<line x1="958.3" y1="15.2" x2="958.3" y2="24" stroke="#404040" stroke-width="1"/>
<line x1="950.4" y1="22.7" x2="957.8" y2="22.7" stroke="#808080" stroke-width="0.7"/>
<line x1="957.5" y1="16.2" x2="957.5" y2="23" stroke="#808080" stroke-width="0.7"/>
<line x1="952.2" y1="17.6" x2="955.8" y2="21.4" stroke="#000" stroke-width="1.3"/>
<line x1="955.8" y1="17.6" x2="952.2" y2="21.4" stroke="#000" stroke-width="1.3"/>
<line x1="0" y1="25.2" x2="960" y2="25.2" stroke="#fff" stroke-width="0.6"/>
<line x1="0" y1="24.7" x2="960" y2="24.7" stroke="#c4c0b8" stroke-width="0.5"/>
<line x1="3.5" y1="27.2" x2="3.5" y2="36.8" stroke="#fff" stroke-width="0.8"/>
<line x1="4.3" y1="27.2" x2="4.3" y2="36.8" stroke="#909090" stroke-width="0.6"/>
<g transform="translate(10.9 31.7) scale(0.7) translate(-5 -5.2)">
<polygon points="2,0.5 6.5,0.5 8.5,2.5 8.5,9.5 2,9.5" fill="#fff" stroke="#303030" stroke-width="0.8"/>
</g>
<g transform="translate(21.8 31.7) scale(0.7) translate(-5 -5.2)">
<polygon points="0.5,3 3,3 4,4 8,4 8,9 0.5,9" fill="#b8b030" stroke="#404020" stroke-width="0.7"/>
<polygon points="2.5,6 10,6 8,9 0.5,9" fill="#e8e060" stroke="#404020" stroke-width="0.6"/>
<line x1="6" y1="2" x2="9" y2="1" stroke="#202020" stroke-width="0.8"/>
</g>
<g transform="translate(32.8 31.7) scale(0.7) translate(-5 -5.2)">
<rect x="1" y="1" width="8.5" height="8.5" fill="#1a1a1a"/>
<rect x="2.8" y="1.5" width="5" height="3.4" fill="#e8e8e8"/>
<rect x="3.2" y="6.3" width="3.6" height="3" fill="#909020"/>
</g>
<line x1="39.6" y1="27.2" x2="39.6" y2="36.8" stroke="#909088" stroke-width="0.7"/>
<line x1="40.4" y1="27.2" x2="40.4" y2="36.8" stroke="#fff" stroke-width="0.7"/>
<g transform="translate(47.5 32.3) scale(0.74) translate(-5 -5.2)">
<path d="M2,4.5 h5 v4 h-5" fill="none" stroke="#2030c0" stroke-width="1.3"/>
<polygon points="3.1,2.3 3.1,6.7 0.9,4.5" fill="#2030c0"/>
</g>
<g transform="translate(59.4 32.3) scale(0.74) translate(-5 -5.2)">
<path d="M8,4.5 h-5 v4 h5" fill="none" stroke="#b0aca4" stroke-width="1.3"/>
<polygon points="6.9,2.3 6.9,6.7 9.1,4.5" fill="#b0aca4"/>
</g>
<line x1="65.4" y1="27.2" x2="65.4" y2="36.8" stroke="#909088" stroke-width="0.7"/>
<line x1="66.2" y1="27.2" x2="66.2" y2="36.8" stroke="#fff" stroke-width="0.7"/>
<g transform="translate(74 31.5) scale(0.86) translate(-5 -5.2)">
<rect x="0.8" y="1" width="9" height="8.4" fill="#fff" stroke="#2030a0" stroke-width="1"/>
<rect x="0.8" y="1" width="9" height="2.2" fill="#2030c0"/>
<rect x="1.5" y="3.5" width="2.6" height="5.4" fill="#9098d8"/>
</g>
<line x1="80.6" y1="27.2" x2="80.6" y2="36.8" stroke="#909088" stroke-width="0.7"/>
<line x1="81.4" y1="27.2" x2="81.4" y2="36.8" stroke="#fff" stroke-width="0.7"/>
<rect x="84.6" y="27.6" width="64" height="10.4" fill="#fff"/>
<text x="86.2" y="35.4" font-size="6.7" fill="#000" textLength="59.2" lengthAdjust="spacingAndGlyphs">Deck + Rampe 19.01</text>
<polygon points="151,32.3 154.6,32.3 152.8,34.1" fill="#000"/>
<polygon points="160.4,33.1 164,33.1 162.2,34.9" fill="#000"/>
<line x1="165.8" y1="26.4" x2="165.8" y2="39.4" stroke="#808080" stroke-width="0.6"/>
<line x1="0" y1="39.9" x2="166" y2="39.9" stroke="#b8b4ac" stroke-width="0.5"/>
<line x1="169" y1="27.2" x2="169" y2="36.8" stroke="#fff" stroke-width="0.8"/>
<line x1="169.8" y1="27.2" x2="169.8" y2="36.8" stroke="#909090" stroke-width="0.6"/>
<g transform="translate(176.9 31.7) scale(0.74) translate(-5 -5.2)">
<rect x="0.8" y="1.5" width="3.6" height="3" fill="#e8e8ff" stroke="#3040c0" stroke-width="1"/>
<rect x="5.6" y="1.5" width="3.6" height="3" fill="#e8e8ff" stroke="#3040c0" stroke-width="1"/>
<rect x="0.8" y="6" width="3.6" height="3" fill="#e8e8ff" stroke="#3040c0" stroke-width="1"/>
<rect x="5.6" y="6" width="3.6" height="3" fill="#e8e8ff" stroke="#3040c0" stroke-width="1"/>
<line x1="4.4" y1="3" x2="5.6" y2="3" stroke="#3040c0" stroke-width="0.8"/>
<line x1="2.6" y1="4.5" x2="2.6" y2="6" stroke="#3040c0" stroke-width="0.8"/>
</g>
<g transform="translate(188.1 31.7) scale(0.74) translate(-5 -5.2)">
<rect x="1.5" y="2" width="7" height="7" fill="#e8e8e0" stroke="#303030" stroke-width="0.9"/>
<line x1="1.5" y1="4.2" x2="8.5" y2="4.2" stroke="#303030" stroke-width="0.7"/>
<rect x="3" y="0.8" width="6.5" height="5" fill="none" stroke="#303030" stroke-width="0.7"/>
</g>
<g transform="translate(198.4 31.7) scale(0.74) translate(-5 -5.2)">
<polygon points="1,3.5 6,3.5 6,9 1,9" fill="#a8a020" stroke="#202020" stroke-width="0.9"/>
<polygon points="1,3.5 3.5,1 9,1 6,3.5" fill="#d8d040" stroke="#202020" stroke-width="0.8"/>
<polygon points="6,3.5 9,1 9,6.5 6,9" fill="#404020" stroke="#202020" stroke-width="0.8"/>
</g>
<g transform="translate(209.7 31.7) scale(0.74) translate(-5 -5.2)">
<rect x="1" y="2" width="3.2" height="7" fill="#f0f0e0" stroke="#404020" stroke-width="0.8"/>
<rect x="5.2" y="2.5" width="3.6" height="6.5" fill="#c0c020" stroke="#606010" stroke-width="0.7"/>
</g>
<g transform="translate(220.6 31.7) scale(0.74) translate(-5 -5.2)">
<rect x="1" y="1.5" width="5.5" height="7.5" fill="#f0f0ff" stroke="#2838b0" stroke-width="1"/>
<rect x="4.5" y="3" width="4.5" height="6.4" fill="#e8e040" stroke="#505010" stroke-width="0.8"/>
</g>
<g transform="translate(231.6 31.7) scale(0.74) translate(-5 -5.2)">
<rect x="1.2" y="1.2" width="7.8" height="8" fill="#8c7c74" stroke="#5a4a44" stroke-width="1"/>
<line x1="3" y1="3" x2="7.2" y2="7.4" stroke="#a89890" stroke-width="1"/>
<line x1="7.2" y1="3" x2="3" y2="7.4" stroke="#a89890" stroke-width="1"/>
</g>
<g transform="translate(243.4 31.7) scale(0.74) translate(-5 -5.2)">
<rect x="1.5" y="1.5" width="7" height="7" fill="#f4e8c0" stroke="#c02020" stroke-width="1.1"/>
<line x1="1.5" y1="5" x2="8.5" y2="5" stroke="#c02020" stroke-width="0.9"/>
<rect x="1" y="1" width="2.4" height="2.4" fill="#e0c020"/>
<rect x="6.8" y="6.6" width="2.4" height="2.4" fill="#3040c0"/>
</g>
<g transform="translate(253.8 31.7) scale(0.74) translate(-5 -5.2)">
<rect x="1.5" y="1.5" width="7" height="7" fill="#f4e0e0" stroke="#c02020" stroke-width="0.9"/>
<line x1="1.5" y1="5" x2="8.5" y2="5" stroke="#c02020" stroke-width="0.8"/>
</g>
<line x1="260.6" y1="27.2" x2="260.6" y2="36.8" stroke="#909088" stroke-width="0.7"/>
<line x1="261.4" y1="27.2" x2="261.4" y2="36.8" stroke="#fff" stroke-width="0.7"/>
<g transform="translate(268.4 31.7) scale(0.74) translate(-5 -5.2)">
<rect x="0.8" y="4" width="9" height="4" fill="#484848"/>
<rect x="2.5" y="1.2" width="5.6" height="3" fill="#fff" stroke="#303030" stroke-width="0.6"/>
<rect x="2.5" y="7" width="5.6" height="2.4" fill="#fff" stroke="#303030" stroke-width="0.5"/>
</g>
<g transform="translate(279.4 31.7) scale(0.74) translate(-5 -5.2)">
<rect x="0.8" y="4" width="9" height="4" fill="#484848"/>
<rect x="2.5" y="1.2" width="5.6" height="3" fill="#fff" stroke="#303030" stroke-width="0.6"/>
<rect x="2.5" y="7" width="5.6" height="2.4" fill="#fff" stroke="#303030" stroke-width="0.5"/>
</g>
<g transform="translate(291 31.7) scale(0.74) translate(-5 -5.2)">
<path d="M0.8,2 q2.2,-1.2 4.2,.6 q2,-1.8 4.2,-.6 v6.4 q-2.2,-1.2 -4.2,.6 q-2,-1.8 -4.2,-.6 z" fill="#f4f4d8" stroke="#505010" stroke-width="1"/>
<rect x="5.6" y="4" width="2.4" height="3" fill="#b0a820"/>
</g>
<g transform="translate(301.9 31.7) scale(0.74) translate(-5 -5.2)">
<polygon points="1,3.5 6,3.5 6,9 1,9" fill="#b8b8b8" stroke="#202020" stroke-width="0.8"/>
<polygon points="1,3.5 3.5,1 9,1 6,3.5" fill="#e8e8e8" stroke="#202020" stroke-width="0.7"/>
<polygon points="6,3.5 9,1 9,6.5 6,9" fill="#808080" stroke="#202020" stroke-width="0.7"/>
</g>
<g transform="translate(312.8 31.7) scale(0.74) translate(-5 -5.2)">
<rect x="1.5" y="1" width="7" height="8.4" fill="#fff" stroke="#303030" stroke-width="0.8"/>
<rect x="2.6" y="2.4" width="3" height="3" fill="#c8c020"/>
<line x1="2.6" y1="7" x2="7.4" y2="7" stroke="#606060" stroke-width="0.7"/>
</g>
<polygon points="320.1,33.1 323.7,33.1 321.9,34.9" fill="#000"/>
<line x1="326" y1="26.4" x2="326" y2="39.4" stroke="#808080" stroke-width="0.6"/>
<line x1="329" y1="27.2" x2="329" y2="36.8" stroke="#fff" stroke-width="0.8"/>
<line x1="329.8" y1="27.2" x2="329.8" y2="36.8" stroke="#909090" stroke-width="0.6"/>
<g transform="translate(336.6 31.7) scale(0.8) translate(-5 -5.2)">
<line x1="1" y1="5.2" x2="9" y2="5.2" stroke="#909088" stroke-width="1.2"/>
</g>
<g transform="translate(347.5 31.7) scale(0.8) translate(-5 -5.2)">
<line x1="1.5" y1="3" x2="8.5" y2="3" stroke="#a8a49c" stroke-width="0.9"/>
<line x1="1.5" y1="6.5" x2="8.5" y2="6.5" stroke="#a8a49c" stroke-width="0.9"/>
<line x1="2" y1="2" x2="2" y2="8" stroke="#a8a49c" stroke-width="0.8"/>
<line x1="8" y1="2" x2="8" y2="8" stroke="#a8a49c" stroke-width="0.8"/>
</g>
<g transform="translate(358 31.7) scale(0.8) translate(-5 -5.2)">
<line x1="1.5" y1="3" x2="8.5" y2="3" stroke="#a8a49c" stroke-width="0.9"/>
<line x1="1.5" y1="6.5" x2="8.5" y2="6.5" stroke="#a8a49c" stroke-width="0.9"/>
<line x1="2" y1="2" x2="2" y2="8" stroke="#a8a49c" stroke-width="0.8"/>
<line x1="8" y1="2" x2="8" y2="8" stroke="#a8a49c" stroke-width="0.8"/>
</g>
<g transform="translate(369.4 31.7) scale(0.8) translate(-5 -5.2)">
<circle cx="5" cy="5.2" r="3.4" fill="none" stroke="#808078" stroke-width="0.9"/>
</g>
<g transform="translate(380.6 31.7) scale(0.8) translate(-5 -5.2)">
<polyline points="8.5,1.5 1.5,8.5 9,8.5" fill="none" stroke="#909088" stroke-width="0.9"/>
</g>
<polygon points="388.2,33.1 391.8,33.1 390,34.9" fill="#000"/>
<line x1="394" y1="26.4" x2="394" y2="39.4" stroke="#808080" stroke-width="0.6"/>
<line x1="397" y1="27.2" x2="397" y2="36.8" stroke="#fff" stroke-width="0.8"/>
<line x1="397.8" y1="27.2" x2="397.8" y2="36.8" stroke="#909090" stroke-width="0.6"/>
<g transform="translate(404.7 31.7) scale(0.74) translate(-5 -5.2)">
<circle cx="3.5" cy="4" r="2.6" fill="#e04040"/>
<circle cx="6.5" cy="4" r="2.6" fill="#3050d0"/>
<circle cx="5" cy="6.8" r="2.6" fill="#e0d030"/>
</g>
<g transform="translate(416.2 31.7) scale(0.74) translate(-5 -5.2)">
<circle cx="4.2" cy="4.2" r="2.8" fill="#f0f0ff" stroke="#303030" stroke-width="0.9"/>
<line x1="6.2" y1="6.4" x2="9" y2="9.2" stroke="#202020" stroke-width="1.4"/>
</g>
<g transform="translate(427.2 31.7) scale(0.74) translate(-5 -5.2)">
<rect x="1.5" y="3" width="6" height="5.5" fill="#b0aca4"/>
<rect x="3.2" y="1.5" width="6" height="5.5" fill="#e8e4dc" stroke="#a09c94" stroke-width="0.7"/>
</g>
<g transform="translate(438 31.7) scale(0.74) translate(-5 -5.2)">
<line x1="2.5" y1="1" x2="2.5" y2="9.5" stroke="#c02020" stroke-width="1.2"/>
<line x1="6.5" y1="1" x2="6.5" y2="9.5" stroke="#303030" stroke-width="1"/>
<rect x="3" y="1.5" width="3" height="2.5" fill="#c02020"/>
</g>
<polygon points="445.2,33.1 448.8,33.1 447,34.9" fill="#000"/>
<line x1="451" y1="26.4" x2="451" y2="39.4" stroke="#808080" stroke-width="0.6"/>
<line x1="453.8" y1="27.2" x2="453.8" y2="36.8" stroke="#fff" stroke-width="0.8"/>
<line x1="454.6" y1="27.2" x2="454.6" y2="36.8" stroke="#909090" stroke-width="0.6"/>
<rect x="489.4" y="26.4" width="11.4" height="11.6" fill="#f4f2ee"/>
<line x1="489.4" y1="26.9" x2="500.8" y2="26.9" stroke="#ffffff" stroke-width="1"/>
<line x1="489.9" y1="26.4" x2="489.9" y2="38" stroke="#ffffff" stroke-width="1"/>
<line x1="489.4" y1="37.5" x2="500.8" y2="37.5" stroke="#808080" stroke-width="1"/>
<line x1="500.3" y1="26.4" x2="500.3" y2="38" stroke="#808080" stroke-width="1"/>
<g transform="translate(462 31.7) scale(0.74) translate(-5 -5.2)">
<rect x="1.2" y="2" width="7.6" height="7" fill="#eeece4" stroke="#a4a418" stroke-width="1.7"/>
<rect x="3" y="4.6" width="4.2" height="3.6" fill="#f8f8f0" stroke="#8a8a80" stroke-width="0.6"/>
</g>
<g transform="translate(472.8 31.7) scale(0.74) translate(-5 -5.2)">
<rect x="1.2" y="2" width="7.6" height="7" fill="#eeece4" stroke="#a4a418" stroke-width="1.7"/>
<rect x="3" y="4.6" width="4.2" height="3.6" fill="#f8f8f0" stroke="#8a8a80" stroke-width="0.6"/>
</g>
<g transform="translate(483.8 31.7) scale(0.74) translate(-5 -5.2)">
<rect x="1.5" y="2" width="7" height="6.8" fill="#e8e5de" stroke="#8a867e" stroke-width="1.1"/>
<line x1="2" y1="4.6" x2="8" y2="4.6" stroke="#8a867e" stroke-width="0.9"/>
</g>
<g transform="translate(495 31.7) scale(0.74) translate(-5 -5.2)">
<rect x="1.5" y="2" width="7" height="6.8" fill="#e8e5de" stroke="#8a867e" stroke-width="1.1"/>
<line x1="2" y1="4.6" x2="8" y2="4.6" stroke="#8a867e" stroke-width="0.9"/>
</g>
<g transform="translate(505.6 31.7) scale(0.74) translate(-5 -5.2)">
<rect x="1.5" y="2" width="7" height="6.8" fill="#e8e5de" stroke="#8a867e" stroke-width="1.1"/>
<line x1="2" y1="4.6" x2="8" y2="4.6" stroke="#8a867e" stroke-width="0.9"/>
</g>
<g transform="translate(517.2 31.7) scale(0.74) translate(-5 -5.2)">
<rect x="1.2" y="2" width="7.6" height="7" fill="#eeece4" stroke="#a4a418" stroke-width="1.7"/>
<rect x="3" y="4.6" width="4.2" height="3.6" fill="#f8f8f0" stroke="#8a8a80" stroke-width="0.6"/>
</g>
<g transform="translate(527.8 31.7) scale(0.74) translate(-5 -5.2)">
<rect x="1.2" y="2" width="7.6" height="7" fill="#eeece4" stroke="#a4a418" stroke-width="1.7"/>
<rect x="3" y="4.6" width="4.2" height="3.6" fill="#f8f8f0" stroke="#8a8a80" stroke-width="0.6"/>
</g>
<g transform="translate(538.8 31.7) scale(0.74) translate(-5 -5.2)">
<rect x="1.5" y="2" width="7" height="6.8" fill="#e8e5de" stroke="#8a867e" stroke-width="1.1"/>
<line x1="2" y1="4.6" x2="8" y2="4.6" stroke="#8a867e" stroke-width="0.9"/>
</g>
<g transform="translate(550 31.7) scale(0.74) translate(-5 -5.2)">
<rect x="1.5" y="2" width="7" height="6.8" fill="#e8e5de" stroke="#8a867e" stroke-width="1.1"/>
<line x1="2" y1="4.6" x2="8" y2="4.6" stroke="#8a867e" stroke-width="0.9"/>
</g>
<g transform="translate(561 31.7) scale(0.74) translate(-5 -5.2)">
<rect x="1.5" y="2" width="7" height="6.8" fill="#e8e5de" stroke="#8a867e" stroke-width="1.1"/>
<line x1="2" y1="4.6" x2="8" y2="4.6" stroke="#8a867e" stroke-width="0.9"/>
</g>
<g transform="translate(571.9 31.7) scale(0.74) translate(-5 -5.2)">
<rect x="1" y="1.5" width="8" height="7.5" fill="#e4e1da" stroke="#a8a820" stroke-width="1.3"/>
<rect x="2.8" y="4.2" width="4.4" height="4" fill="#d8d4cc" stroke="#909088" stroke-width="0.6"/>
</g>
<g transform="translate(582.5 31.7) scale(0.74) translate(-5 -5.2)">
<rect x="1" y="1.5" width="8" height="7.5" fill="#e4e1da" stroke="#a8a820" stroke-width="1.3"/>
<rect x="2.8" y="4.2" width="4.4" height="4" fill="#d8d4cc" stroke="#909088" stroke-width="0.6"/>
</g>
<polygon points="590.3,33.1 593.9,33.1 592.1,34.9" fill="#000"/>
<line x1="596.6" y1="26.4" x2="596.6" y2="39.4" stroke="#808080" stroke-width="0.6"/>
<line x1="168" y1="39.9" x2="597" y2="39.9" stroke="#b8b4ac" stroke-width="0.5"/>
<line x1="3.5" y1="41.4" x2="3.5" y2="51" stroke="#fff" stroke-width="0.8"/>
<line x1="4.3" y1="41.4" x2="4.3" y2="51" stroke="#909090" stroke-width="0.6"/>
<g transform="translate(10.6 45.9) scale(0.74) translate(-5 -5.2)">
<rect x="1" y="2" width="3.2" height="7" fill="#f0f0e0" stroke="#404020" stroke-width="0.8"/>
<rect x="5.2" y="2.5" width="3.6" height="6.5" fill="#c0c020" stroke="#606010" stroke-width="0.7"/>
</g>
<g transform="translate(21.3 45.9) scale(0.74) translate(-5 -5.2)">
<rect x="1" y="1.5" width="3.6" height="4" fill="#c8c828" stroke="#505010" stroke-width="0.7"/>
<rect x="5" y="4.5" width="4" height="4.5" fill="#c8c828" stroke="#505010" stroke-width="0.7"/>
<line x1="3" y1="3.5" x2="7" y2="6" stroke="#2030c0" stroke-width="0.8"/>
</g>
<g transform="translate(32.9 45.9) scale(0.74) translate(-5 -5.2)">
<rect x="1" y="1.5" width="3.6" height="4" fill="#c8c828" stroke="#505010" stroke-width="0.7"/>
<rect x="5" y="4.5" width="4" height="4.5" fill="#c8c828" stroke="#505010" stroke-width="0.7"/>
<line x1="3" y1="3.5" x2="7" y2="6" stroke="#2030c0" stroke-width="0.8"/>
</g>
<g transform="translate(43.7 45.9) scale(0.74) translate(-5 -5.2)">
<rect x="0.8" y="5" width="8.6" height="3" fill="#d8d040" stroke="#404010" stroke-width="0.8"/>
<line x1="4" y1="3" x2="8" y2="3" stroke="#202020" stroke-width="1"/>
<polygon points="7.2,1.4 7.2,4.6 8.8,3" fill="#202020"/>
<rect x="0.6" y="3" width="2.6" height="4" fill="#f0f0f0" stroke="#404040" stroke-width="0.7"/>
</g>
<g transform="translate(54.9 45.9) scale(0.74) translate(-5 -5.2)">
<rect x="1" y="2" width="3.2" height="7" fill="#f0f0e0" stroke="#404020" stroke-width="0.8"/>
<rect x="5.2" y="2.5" width="3.6" height="6.5" fill="#c0c020" stroke="#606010" stroke-width="0.7"/>
</g>
<g transform="translate(65.7 45.9) scale(0.74) translate(-5 -5.2)">
<rect x="1" y="2" width="3.2" height="7" fill="#f0f0e0" stroke="#404020" stroke-width="0.8"/>
<rect x="5.2" y="2.5" width="3.6" height="6.5" fill="#c0c020" stroke="#606010" stroke-width="0.7"/>
</g>
<g transform="translate(76.5 45.9) scale(0.74) translate(-5 -5.2)">
<rect x="1" y="2" width="3" height="7" fill="#f0f0e0" stroke="#404020" stroke-width="0.8"/>
<rect x="5.4" y="2" width="3.2" height="7" fill="#c0c020" stroke="#606010" stroke-width="0.7"/>
<rect x="3.8" y="3" width="1.8" height="5" fill="#c020c0"/>
<line x1="1" y1="1.2" x2="9" y2="1.2" stroke="#202020" stroke-width="1" stroke-dasharray="1.4 1"/>
</g>
<g transform="translate(88.2 45.9) scale(0.74) translate(-5 -5.2)">
<line x1="2" y1="1.5" x2="8" y2="8.5" stroke="#202020" stroke-width="1"/>
<line x1="8" y1="1.5" x2="2" y2="8.5" stroke="#202020" stroke-width="1"/>
<rect x="6.2" y="2" width="2.4" height="7" fill="#c0c020"/>
<circle cx="3" cy="8" r="1.3" fill="none" stroke="#3040c0" stroke-width="0.8"/>
</g>
<g transform="translate(98.3 45.9) scale(0.74) translate(-5 -5.2)">
<line x1="2.4" y1="1.5" x2="2.4" y2="9" stroke="#202020" stroke-width="1.2"/>
<polygon points="0.8,2.8 4,2.8 2.4,1.2" fill="#202020"/>
<polygon points="0.8,7.8 4,7.8 2.4,9.4" fill="#202020"/>
<rect x="5.6" y="1.5" width="3" height="7.6" fill="#c0c020" stroke="#606010" stroke-width="0.7"/>
</g>
<g transform="translate(109.9 45.9) scale(0.74) translate(-5 -5.2)">
<rect x="1" y="1.5" width="3.6" height="4" fill="#c8c828" stroke="#505010" stroke-width="0.7"/>
<rect x="5" y="4.5" width="4" height="4.5" fill="#c8c828" stroke="#505010" stroke-width="0.7"/>
<line x1="3" y1="3.5" x2="7" y2="6" stroke="#2030c0" stroke-width="0.8"/>
</g>
<g transform="translate(121.5 45.9) scale(0.74) translate(-5 -5.2)">
<line x1="2" y1="1.5" x2="8" y2="8.5" stroke="#202020" stroke-width="1"/>
<line x1="8" y1="1.5" x2="2" y2="8.5" stroke="#202020" stroke-width="1"/>
<rect x="6.2" y="2" width="2.4" height="7" fill="#c0c020"/>
<circle cx="3" cy="8" r="1.3" fill="none" stroke="#3040c0" stroke-width="0.8"/>
</g>
<g transform="translate(131.9 45.9) scale(0.74) translate(-5 -5.2)">
<line x1="2.4" y1="1.5" x2="2.4" y2="9" stroke="#202020" stroke-width="1.2"/>
<polygon points="0.8,2.8 4,2.8 2.4,1.2" fill="#202020"/>
<polygon points="0.8,7.8 4,7.8 2.4,9.4" fill="#202020"/>
<rect x="5.6" y="1.5" width="3" height="7.6" fill="#c0c020" stroke="#606010" stroke-width="0.7"/>
</g>
<g transform="translate(142.8 45.9) scale(0.74) translate(-5 -5.2)">
<line x1="0.8" y1="5.2" x2="9.2" y2="5.2" stroke="#a0a010" stroke-width="1.2"/>
<line x1="2.03" y1="2.23" x2="7.97" y2="8.17" stroke="#a0a010" stroke-width="1.2"/>
<line x1="5" y1="1" x2="5" y2="9.4" stroke="#a0a010" stroke-width="1.2"/>
<line x1="7.97" y1="2.23" x2="2.03" y2="8.17" stroke="#a0a010" stroke-width="1.2"/>
<circle cx="5" cy="5.2" r="1.2" fill="#303030"/>
</g>
<g transform="translate(153.4 45.9) scale(0.74) translate(-5 -5.2)">
<rect x="0.8" y="3.2" width="8.6" height="3.6" fill="#c8c828" stroke="#404010" stroke-width="0.7"/>
<line x1="1" y1="8" x2="9" y2="8" stroke="#2030c0" stroke-width="1.2"/>
</g>
<line x1="160.6" y1="41.4" x2="160.6" y2="51" stroke="#909088" stroke-width="0.7"/>
<line x1="161.4" y1="41.4" x2="161.4" y2="51" stroke="#fff" stroke-width="0.7"/>
<g transform="translate(169 45.9) scale(0.74) translate(-5 -5.2)">
<rect x="1" y="1.5" width="4.5" height="3.5" fill="#f8e8e8" stroke="#c02020" stroke-width="0.8"/>
<rect x="4.5" y="5" width="4.5" height="3.8" fill="#e8e8f8" stroke="#2838b0" stroke-width="0.8"/>
</g>
<g transform="translate(180.3 45.9) scale(0.74) translate(-5 -5.2)">
<circle cx="5" cy="2.6" r="1.7" fill="none" stroke="#2838b0" stroke-width="0.9"/>
<path d="M1.5,9 q3.5,-6 7,0" fill="none" stroke="#c02020" stroke-width="1"/>
</g>
<g transform="translate(191 45.9) scale(0.74) translate(-5 -5.2)">
<polygon points="1,2.5 4,2.5 5,3.6 9,3.6 9,9 1,9" fill="#e8e040" stroke="#505010" stroke-width="0.8"/>
<rect x="5.5" y="1" width="3" height="2.6" fill="#c03030"/>
</g>
<line x1="197.5" y1="41.4" x2="197.5" y2="51" stroke="#909088" stroke-width="0.7"/>
<line x1="198.3" y1="41.4" x2="198.3" y2="51" stroke="#fff" stroke-width="0.7"/>
<g transform="translate(205.6 45.9) scale(0.74) translate(-5 -5.2)">
<rect x="0.6" y="3.6" width="9" height="4" fill="#c8c020" stroke="#303010" stroke-width="0.8" rx="2"/>
<circle cx="3" cy="5.6" r="0.9" fill="#fff"/>
<circle cx="7" cy="5.6" r="0.9" fill="#fff"/>
</g>
<g transform="translate(216.9 45.9) scale(0.74) translate(-5 -5.2)">
<rect x="0.6" y="3.6" width="9" height="4" fill="#c8c020" stroke="#303010" stroke-width="0.8" rx="2"/>
<circle cx="3" cy="5.6" r="0.9" fill="#fff"/>
<circle cx="7" cy="5.6" r="0.9" fill="#fff"/>
</g>
<line x1="223.5" y1="41.4" x2="223.5" y2="51" stroke="#909088" stroke-width="0.7"/>
<line x1="224.3" y1="41.4" x2="224.3" y2="51" stroke="#fff" stroke-width="0.7"/>
<g transform="translate(231.9 45.9) scale(0.74) translate(-5 -5.2)">
<circle cx="3" cy="3" r="1.6" fill="#2838c0"/>
<circle cx="7" cy="3" r="1.6" fill="#c8c020"/>
<rect x="1" y="5" width="4" height="4" fill="#2838c0"/>
<rect x="5.4" y="5.4" width="4" height="3.6" fill="#c8c020"/>
</g>
<g transform="translate(243 45.9) scale(0.74) translate(-5 -5.2)">
<circle cx="3" cy="3" r="1.6" fill="#2838c0"/>
<circle cx="7" cy="3" r="1.6" fill="#c8c020"/>
<rect x="1" y="5" width="4" height="4" fill="#2838c0"/>
<rect x="5.4" y="5.4" width="4" height="3.6" fill="#c8c020"/>
</g>
<g transform="translate(253.4 45.9) scale(0.74) translate(-5 -5.2)">
<rect x="1" y="2.5" width="3" height="6.5" fill="#b8b4ac"/>
<rect x="5" y="1.5" width="3.6" height="7.5" fill="#e0dcd4" stroke="#a8a49c" stroke-width="0.7"/>
</g>
<g transform="translate(265 45.9) scale(0.74) translate(-5 -5.2)">
<rect x="1" y="2.5" width="3" height="6.5" fill="#b8b4ac"/>
<rect x="5" y="1.5" width="3.6" height="7.5" fill="#e0dcd4" stroke="#a8a49c" stroke-width="0.7"/>
</g>
<g transform="translate(275.6 45.9) scale(0.74) translate(-5 -5.2)">
<polygon points="1,2.4 4.4,1 5.4,4 2,5.4" fill="#e8e020" stroke="#303010" stroke-width="0.7"/>
<polygon points="4.6,5 8.4,3.6 9.2,7 5.6,8.6" fill="#e8e020" stroke="#303010" stroke-width="0.7"/>
<rect x="1.4" y="6" width="3" height="3" fill="#303030"/>
</g>
<g transform="translate(287 45.9) scale(0.74) translate(-5 -5.2)">
<polygon points="1,2.4 4.4,1 5.4,4 2,5.4" fill="#e8e020" stroke="#303010" stroke-width="0.7"/>
<polygon points="4.6,5 8.4,3.6 9.2,7 5.6,8.6" fill="#e8e020" stroke="#303010" stroke-width="0.7"/>
<rect x="1.4" y="6" width="3" height="3" fill="#303030"/>
</g>
<polygon points="294.4,46.5 298,46.5 296.2,48.3" fill="#000"/>
<line x1="300" y1="40.4" x2="300" y2="53" stroke="#808080" stroke-width="0.6"/>
<line x1="302.4" y1="41.4" x2="302.4" y2="51" stroke="#fff" stroke-width="0.8"/>
<line x1="303.2" y1="41.4" x2="303.2" y2="51" stroke="#909090" stroke-width="0.6"/>
<g transform="translate(310 45.9) scale(0.74) translate(-5 -5.2)">
<rect x="1.5" y="3" width="6" height="5.5" fill="#b0aca4"/>
<rect x="3.2" y="1.5" width="6" height="5.5" fill="#e8e4dc" stroke="#a09c94" stroke-width="0.7"/>
</g>
<g transform="translate(321 45.9) scale(0.74) translate(-5 -5.2)">
<rect x="1.5" y="3" width="6" height="5.5" fill="#b0aca4"/>
<rect x="3.2" y="1.5" width="6" height="5.5" fill="#e8e4dc" stroke="#a09c94" stroke-width="0.7"/>
</g>
<g transform="translate(332 45.9) scale(0.74) translate(-5 -5.2)">
<rect x="1.5" y="3" width="6" height="5.5" fill="#b0aca4"/>
<rect x="3.2" y="1.5" width="6" height="5.5" fill="#e8e4dc" stroke="#a09c94" stroke-width="0.7"/>
</g>
<g transform="translate(343.4 45.9) scale(0.74) translate(-5 -5.2)">
<rect x="1.5" y="3" width="6" height="5.5" fill="#b0aca4"/>
<rect x="3.2" y="1.5" width="6" height="5.5" fill="#e8e4dc" stroke="#a09c94" stroke-width="0.7"/>
</g>
<line x1="350.6" y1="41.4" x2="350.6" y2="51" stroke="#909088" stroke-width="0.7"/>
<line x1="351.4" y1="41.4" x2="351.4" y2="51" stroke="#fff" stroke-width="0.7"/>
<g transform="translate(359 45.9) scale(0.74) translate(-5 -5.2)">
<rect x="1" y="2.5" width="3" height="6.5" fill="#b8b4ac"/>
<rect x="5" y="1.5" width="3.6" height="7.5" fill="#e0dcd4" stroke="#a8a49c" stroke-width="0.7"/>
</g>
<g transform="translate(370.3 45.9) scale(0.74) translate(-5 -5.2)">
<line x1="1" y1="3" x2="9" y2="7.5" stroke="#707070" stroke-width="1.2"/>
<line x1="3" y1="8.5" x2="7.5" y2="1.5" stroke="#808080" stroke-width="1"/>
</g>
<line x1="377.5" y1="41.4" x2="377.5" y2="51" stroke="#909088" stroke-width="0.7"/>
<line x1="378.3" y1="41.4" x2="378.3" y2="51" stroke="#fff" stroke-width="0.7"/>
<g transform="translate(385.3 45.9) scale(0.74) translate(-5 -5.2)">
<polygon points="1,2.5 4,2.5 5,3.6 9,3.6 9,9 1,9" fill="#e8e040" stroke="#505010" stroke-width="0.8"/>
<rect x="5.5" y="1" width="3" height="2.6" fill="#c03030"/>
</g>
<polygon points="392.2,46.5 395.8,46.5 394,48.3" fill="#000"/>
<line x1="397.6" y1="40.4" x2="397.6" y2="53" stroke="#808080" stroke-width="0.6"/>
<line x1="400.6" y1="41.4" x2="400.6" y2="51" stroke="#fff" stroke-width="0.8"/>
<line x1="401.4" y1="41.4" x2="401.4" y2="51" stroke="#909090" stroke-width="0.6"/>
<rect x="403" y="41.4" width="29.8" height="10" fill="#fff"/>
<line x1="403" y1="41.9" x2="432.8" y2="41.9" stroke="#808080" stroke-width="1"/>
<line x1="403.5" y1="41.4" x2="403.5" y2="51.4" stroke="#808080" stroke-width="1"/>
<line x1="403" y1="50.9" x2="432.8" y2="50.9" stroke="#ffffff" stroke-width="1"/>
<line x1="432.3" y1="41.4" x2="432.3" y2="51.4" stroke="#ffffff" stroke-width="1"/>
<line x1="403.6" y1="42.2" x2="432.2" y2="42.2" stroke="#404040" stroke-width="0.6"/>
<line x1="404.2" y1="41.8" x2="404.2" y2="51" stroke="#404040" stroke-width="0.6"/>
<text x="421.4" y="49.3" font-size="6.6" fill="#000" text-anchor="end">0.5</text>
<rect x="423.4" y="42.4" width="8.8" height="4.1" fill="#d4d0c8" stroke="#808080" stroke-width="0.4"/>
<rect x="423.4" y="46.7" width="8.8" height="4.1" fill="#d4d0c8" stroke="#808080" stroke-width="0.4"/>
<polygon points="426.5,45.15 429.1,45.15 427.8,43.85" fill="#000"/>
<polygon points="426.5,48.25 429.1,48.25 427.8,49.55" fill="#000"/>
<rect x="445.6" y="41.4" width="29.8" height="10" fill="#fff"/>
<line x1="445.6" y1="41.9" x2="475.4" y2="41.9" stroke="#808080" stroke-width="1"/>
<line x1="446.1" y1="41.4" x2="446.1" y2="51.4" stroke="#808080" stroke-width="1"/>
<line x1="445.6" y1="50.9" x2="475.4" y2="50.9" stroke="#ffffff" stroke-width="1"/>
<line x1="474.9" y1="41.4" x2="474.9" y2="51.4" stroke="#ffffff" stroke-width="1"/>
<line x1="446.2" y1="42.2" x2="474.8" y2="42.2" stroke="#404040" stroke-width="0.6"/>
<line x1="446.8" y1="41.8" x2="446.8" y2="51" stroke="#404040" stroke-width="0.6"/>
<text x="463.8" y="49.3" font-size="6.6" fill="#000" text-anchor="end">30</text>
<rect x="466" y="42.4" width="8.8" height="4.1" fill="#d4d0c8" stroke="#808080" stroke-width="0.4"/>
<rect x="466" y="46.7" width="8.8" height="4.1" fill="#d4d0c8" stroke="#808080" stroke-width="0.4"/>
<polygon points="469.1,45.15 471.7,45.15 470.4,43.85" fill="#000"/>
<polygon points="469.1,48.25 471.7,48.25 470.4,49.55" fill="#000"/>
<g transform="translate(440 45.9) scale(0.74) translate(-5 -5.2)">
<line x1="1.6" y1="6.4" x2="8.6" y2="6.4" stroke="#d02020" stroke-width="1.3"/>
<line x1="3" y1="2.4" x2="3" y2="9" stroke="#d02020" stroke-width="1.1"/>
<line x1="7" y1="2.4" x2="7" y2="9" stroke="#d02020" stroke-width="1.1"/>
<rect x="3.8" y="7.2" width="2.6" height="2" fill="#2030c0"/>
<circle cx="5" cy="2" r="1.1" fill="#d02020"/>
</g>
<g transform="translate(483 45.9) scale(0.74) translate(-5 -5.2)">
<line x1="1.6" y1="6.4" x2="8.6" y2="6.4" stroke="#d02020" stroke-width="1.3"/>
<line x1="3" y1="2.4" x2="3" y2="9" stroke="#d02020" stroke-width="1.1"/>
<line x1="7" y1="2.4" x2="7" y2="9" stroke="#d02020" stroke-width="1.1"/>
<rect x="3.8" y="7.2" width="2.6" height="2" fill="#2030c0"/>
<circle cx="5" cy="2" r="1.1" fill="#d02020"/>
</g>
<g transform="translate(494.4 45.9) scale(0.74) translate(-5 -5.2)">
<rect x="1.5" y="1.5" width="7" height="7.5" fill="#f0f0f8" stroke="#2838b0" stroke-width="0.9"/>
<line x1="1.5" y1="4" x2="8.5" y2="4" stroke="#2838b0" stroke-width="0.8"/>
<line x1="5" y1="1.5" x2="5" y2="9" stroke="#2838b0" stroke-width="0.7"/>
</g>
<polygon points="501.2,46.5 504.8,46.5 503,48.3" fill="#000"/>
<line x1="507" y1="40.4" x2="507" y2="53" stroke="#808080" stroke-width="0.6"/>
<line x1="510" y1="41.4" x2="510" y2="51" stroke="#fff" stroke-width="0.8"/>
<line x1="510.8" y1="41.4" x2="510.8" y2="51" stroke="#909090" stroke-width="0.6"/>
<rect x="513" y="40.8" width="11" height="11.4" fill="#f4f2ee"/>
<line x1="513" y1="41.3" x2="524" y2="41.3" stroke="#ffffff" stroke-width="1"/>
<line x1="513.5" y1="40.8" x2="513.5" y2="52.2" stroke="#ffffff" stroke-width="1"/>
<line x1="513" y1="51.7" x2="524" y2="51.7" stroke="#808080" stroke-width="1"/>
<line x1="523.5" y1="40.8" x2="523.5" y2="52.2" stroke="#808080" stroke-width="1"/>
<rect x="611.8" y="40.8" width="11" height="11.4" fill="#f4f2ee"/>
<line x1="611.8" y1="41.3" x2="622.8" y2="41.3" stroke="#ffffff" stroke-width="1"/>
<line x1="612.3" y1="40.8" x2="612.3" y2="52.2" stroke="#ffffff" stroke-width="1"/>
<line x1="611.8" y1="51.7" x2="622.8" y2="51.7" stroke="#808080" stroke-width="1"/>
<line x1="622.3" y1="40.8" x2="622.3" y2="52.2" stroke="#808080" stroke-width="1"/>
<g transform="translate(518.4 45.9) scale(0.74) translate(-5 -5.2)">
<rect x="1.5" y="1.5" width="4.5" height="7.5" fill="#f4f4ff" stroke="#2838b0" stroke-width="0.9"/>
<polygon points="7,3.2 7,7.2 9,5.2" fill="#d02020"/>
<line x1="4" y1="5.2" x2="8" y2="5.2" stroke="#d02020" stroke-width="1"/>
</g>
<g transform="translate(528 45.9) scale(0.74) translate(-5 -5.2)">
<rect x="1.5" y="1.5" width="4.5" height="7.5" fill="#f4f4ff" stroke="#2838b0" stroke-width="0.9"/>
<circle cx="6.5" cy="5.5" r="2.4" fill="none" stroke="#d02020" stroke-width="1"/>
</g>
<g transform="translate(539.7 45.9) scale(0.74) translate(-5 -5.2)">
<rect x="2.2" y="1.5" width="4.2" height="7.5" fill="#f4f4ff" stroke="#2838b0" stroke-width="1"/>
<line x1="2.2" y1="5" x2="6.4" y2="5" stroke="#2838b0" stroke-width="0.9"/>
<circle cx="1.8" cy="3" r="1.2" fill="#d02020"/>
<circle cx="7.6" cy="3.4" r="1.3" fill="#d02020"/>
<circle cx="7.6" cy="7" r="1" fill="#2838b0"/>
</g>
<g transform="translate(550 45.9) scale(0.74) translate(-5 -5.2)">
<rect x="1.5" y="1.5" width="4.5" height="7.5" fill="#f4f4ff" stroke="#2838b0" stroke-width="0.9"/>
<circle cx="6.5" cy="5.5" r="2.4" fill="none" stroke="#d02020" stroke-width="1"/>
</g>
<g transform="translate(560.6 45.9) scale(0.74) translate(-5 -5.2)">
<rect x="2.5" y="1.5" width="4.5" height="7.5" fill="#ffecec" stroke="#d02020" stroke-width="1"/>
<line x1="2.5" y1="4" x2="7" y2="4" stroke="#d02020" stroke-width="0.8"/>
<line x1="2.5" y1="6.5" x2="7" y2="6.5" stroke="#d02020" stroke-width="0.8"/>
</g>
<g transform="translate(572.5 45.9) scale(0.74) translate(-5 -5.2)">
<rect x="1.5" y="1.5" width="4.4" height="6" fill="#f4f4ff" stroke="#2838b0" stroke-width="1"/>
<line x1="1.5" y1="4.4" x2="5.9" y2="4.4" stroke="#2838b0" stroke-width="0.9"/>
<polyline points="5.9,7.5 5.9,9 8.6,9" fill="none" stroke="#202020" stroke-width="0.9"/>
</g>
<g transform="translate(583.8 45.9) scale(0.74) translate(-5 -5.2)">
<rect x="1.5" y="1.5" width="4" height="7.5" fill="#f0f0f8" stroke="#2838b0" stroke-width="0.9"/>
<rect x="5" y="3" width="4" height="4.5" fill="#e04040" stroke="#a01010" stroke-width="0.6"/>
</g>
<g transform="translate(594.7 45.9) scale(0.74) translate(-5 -5.2)">
<line x1="1.24" y1="3.83" x2="8.76" y2="6.57" stroke="#a09c94" stroke-width="0.9"/>
<line x1="3.31" y1="1.57" x2="6.69" y2="8.83" stroke="#a09c94" stroke-width="0.9"/>
<line x1="6.37" y1="1.44" x2="3.63" y2="8.96" stroke="#a09c94" stroke-width="0.9"/>
<line x1="8.63" y1="3.51" x2="1.37" y2="6.89" stroke="#a09c94" stroke-width="0.9"/>
</g>
<g transform="translate(605.6 45.9) scale(0.74) translate(-5 -5.2)">
<rect x="2.2" y="1.5" width="4.2" height="7.5" fill="#f4f4ff" stroke="#2838b0" stroke-width="1"/>
<line x1="2.2" y1="5" x2="6.4" y2="5" stroke="#2838b0" stroke-width="0.9"/>
<circle cx="1.8" cy="3" r="1.2" fill="#d02020"/>
<circle cx="7.6" cy="3.4" r="1.3" fill="#d02020"/>
<circle cx="7.6" cy="7" r="1" fill="#2838b0"/>
</g>
<g transform="translate(617.2 45.9) scale(0.74) translate(-5 -5.2)">
<rect x="1.2" y="1.5" width="4.4" height="7.5" fill="#f4f4ff" stroke="#2838b0" stroke-width="1"/>
<line x1="1.2" y1="4.6" x2="5.6" y2="4.6" stroke="#d02020" stroke-width="1"/>
<rect x="5.8" y="2" width="3" height="4.4" fill="#b0b030"/>
</g>
<g transform="translate(627.5 45.9) scale(0.74) translate(-5 -5.2)">
<circle cx="5" cy="5.2" r="2.6" fill="#e03030" stroke="#303030" stroke-width="0.6"/>
<line x1="5" y1="0.8" x2="5" y2="9.6" stroke="#207020" stroke-width="1"/>
<line x1="0.6" y1="5.2" x2="9.4" y2="5.2" stroke="#207020" stroke-width="1"/>
</g>
<line x1="634" y1="41.4" x2="634" y2="51" stroke="#909088" stroke-width="0.7"/>
<line x1="634.8" y1="41.4" x2="634.8" y2="51" stroke="#fff" stroke-width="0.7"/>
<g transform="translate(642.5 45.9) scale(0.74) translate(-5 -5.2)">
<rect x="1" y="1" width="8.5" height="8.5" fill="#a09c94"/>
<rect x="2.8" y="1.5" width="5" height="3.4" fill="#e8e8e8"/>
</g>
<g transform="translate(654 45.9) scale(0.74) translate(-5 -5.2)">
<rect x="1.5" y="4" width="7" height="5" fill="#d8c020" stroke="#605010" stroke-width="0.7"/>
<rect x="5" y="1.5" width="4" height="4" fill="#d03030" stroke="#601010" stroke-width="0.6"/>
</g>
<g transform="translate(664.7 45.9) scale(0.74) translate(-5 -5.2)">
<rect x="1" y="3" width="7.5" height="6" fill="#404040"/>
<polyline points="2.5,6 4.5,8 8.5,2" fill="none" stroke="#c8c020" stroke-width="1.3"/>
</g>
<g transform="translate(675.6 45.9) scale(0.74) translate(-5 -5.2)">
<rect x="1" y="3" width="7.5" height="6" fill="#b0aca4"/>
<polyline points="2.5,6 4.5,8 8.5,2" fill="none" stroke="#888480" stroke-width="1.2"/>
</g>
<polygon points="683.4,46.7 687,46.7 685.2,48.5" fill="#000"/>
<line x1="689.6" y1="40.4" x2="689.6" y2="53" stroke="#808080" stroke-width="0.6"/>
<line x1="0" y1="53.2" x2="690" y2="53.2" stroke="#b8b4ac" stroke-width="0.4"/>
<rect x="0" y="53" width="123.5" height="523" fill="#d4d0c8"/>
<rect x="0" y="52.8" width="121" height="11.4" fill="#808080"/>
<text x="3" y="61.3" font-size="6.9" fill="#d4d0c8" textLength="31.5" lengthAdjust="spacingAndGlyphs">Ergebnisse</text>
<path d="M105.4,59.4 v-3 h2.6 v3 M107.6,56.6 v2.8 M104.2,59.5 h5 M106.6,59.6 v2.4" fill="none" stroke="#fff" stroke-width=".8"/>
<line x1="113.2" y1="56" x2="117.8" y2="61" stroke="#fff" stroke-width="1.2"/>
<line x1="117.8" y1="56" x2="113.2" y2="61" stroke="#fff" stroke-width="1.2"/>
<line x1="120.9" y1="53" x2="120.9" y2="554" stroke="#fff" stroke-width="0.8"/>
<line x1="122.3" y1="53" x2="122.3" y2="563" stroke="#808080" stroke-width="0.9"/>
<rect x="2.2" y="66" width="117" height="469" fill="#d4d0c8"/>
<line x1="2.2" y1="66.5" x2="119.2" y2="66.5" stroke="#808080" stroke-width="1"/>
<line x1="2.7" y1="66" x2="2.7" y2="535" stroke="#808080" stroke-width="1"/>
<line x1="2.2" y1="534.5" x2="119.2" y2="534.5" stroke="#ffffff" stroke-width="1"/>
<line x1="118.7" y1="66" x2="118.7" y2="535" stroke="#ffffff" stroke-width="1"/>
<rect x="5.2" y="71.8" width="112.8" height="462.7" fill="#fff"/>
<line x1="5.2" y1="72.3" x2="118" y2="72.3" stroke="#808080" stroke-width="1"/>
<line x1="5.7" y1="71.8" x2="5.7" y2="534.5" stroke="#808080" stroke-width="1"/>
<line x1="5.2" y1="534" x2="118" y2="534" stroke="#ffffff" stroke-width="1"/>
<line x1="117.5" y1="71.8" x2="117.5" y2="534.5" stroke="#ffffff" stroke-width="1"/>
<line x1="5.7" y1="71.8" x2="5.7" y2="534" stroke="#606060" stroke-width="0.9"/>
<line x1="2.7" y1="66" x2="2.7" y2="535" stroke="#606060" stroke-width="0.9"/>
<line x1="5.2" y1="72.3" x2="118" y2="72.3" stroke="#606060" stroke-width="0.9"/>
<line x1="2.2" y1="66.5" x2="119.2" y2="66.5" stroke="#606060" stroke-width="0.9"/>
<rect x="6.4" y="73" width="111" height="451" fill="#fff"/>
<line x1="12.2" y1="75" x2="12.2" y2="303" stroke="#909090" stroke-width="0.6" stroke-dasharray=".6 .6"/>
<line x1="12.2" y1="77.9" x2="17" y2="77.9" stroke="#909090" stroke-width="0.6" stroke-dasharray=".6 .6"/>
<polyline points="18.5,80.9 18.5,75.9 24.5,75.9 24.5,80.9" fill="none" stroke="#303030" stroke-width="0.9"/>
<path d="M18.5,75.9 q3,2.6 6,0" fill="none" stroke="#208020" stroke-width="1"/>
<text x="28" y="80.3" font-size="6.7" fill="#000" textLength="41" lengthAdjust="spacingAndGlyphs">Verformungen</text>
<line x1="12.2" y1="86.94" x2="17" y2="86.94" stroke="#909090" stroke-width="0.6" stroke-dasharray=".6 .6"/>
<polyline points="18.5,89.94 18.5,84.94 24.5,84.94 24.5,89.94" fill="none" stroke="#303030" stroke-width="0.9"/>
<path d="M18.5,84.94 q3,2.6 6,0" fill="none" stroke="#208020" stroke-width="1"/>
<line x1="17.9" y1="87.44" x2="20" y2="83.94" stroke="#2030c0" stroke-width="1"/>
<text x="28" y="89.34" font-size="6.7" fill="#000" textLength="53.5" lengthAdjust="spacingAndGlyphs">Verformte Struktur</text>
<line x1="12.2" y1="95.98" x2="17" y2="95.98" stroke="#909090" stroke-width="0.6" stroke-dasharray=".6 .6"/>
<rect x="10" y="93.78" width="4.4" height="4.4" fill="#fff" stroke="#808080" stroke-width="0.6"/>
<line x1="11" y1="95.98" x2="13.4" y2="95.98" stroke="#000" stroke-width="0.6"/>
<polygon points="21.5,92.98 24.5,97.98 18.5,97.98" fill="#e0e0e0" stroke="#404040" stroke-width="0.8"/>
<line x1="17.5" y1="98.98" x2="25.5" y2="98.98" stroke="#404040" stroke-width="0.8"/>
<text x="28" y="98.38" font-size="6.7" fill="#000" textLength="23.5" lengthAdjust="spacingAndGlyphs">Auflager</text>
<line x1="21.5" y1="100.5" x2="21.5" y2="105.02" stroke="#909090" stroke-width="0.6" stroke-dasharray=".6 .6"/>
<line x1="21.5" y1="105.02" x2="27" y2="105.02" stroke="#909090" stroke-width="0.6" stroke-dasharray=".6 .6"/>
<rect x="6" y="100.42" width="111.2" height="9.1" fill="#0a246a"/>
<line x1="29" y1="108.02" x2="29" y2="102.02" stroke="#20a020" stroke-width="1"/>
<line x1="29" y1="105.02" x2="34" y2="107.52" stroke="#e03030" stroke-width="1"/>
<line x1="29" y1="105.02" x2="33.5" y2="102.52" stroke="#3040e0" stroke-width="1"/>
<text x="37.3" y="107.42" font-size="6.7" fill="#fff" textLength="31.5" lengthAdjust="spacingAndGlyphs">Reaktionen</text>
<line x1="21.5" y1="109.54" x2="21.5" y2="114.06" stroke="#909090" stroke-width="0.6" stroke-dasharray=".6 .6"/>
<line x1="21.5" y1="114.06" x2="27" y2="114.06" stroke="#909090" stroke-width="0.6" stroke-dasharray=".6 .6"/>
<rect x="28" y="111.06" width="6.5" height="4" fill="#fff" stroke="#303030" stroke-width="0.8"/>
<rect x="27.5" y="115.06" width="7.5" height="1.6" fill="#20a020"/>
<rect x="27.5" y="116.66" width="7.5" height="1" fill="#c02020"/>
<text x="37.3" y="116.46" font-size="6.7" fill="#000" textLength="26.5" lengthAdjust="spacingAndGlyphs">Intensität</text>
<line x1="21.5" y1="118.58" x2="21.5" y2="123.1" stroke="#909090" stroke-width="0.6" stroke-dasharray=".6 .6"/>
<line x1="21.5" y1="123.1" x2="27" y2="123.1" stroke="#909090" stroke-width="0.6" stroke-dasharray=".6 .6"/>
<line x1="30" y1="126.6" x2="30" y2="121.1" stroke="#2030c0" stroke-width="1"/>
<line x1="28" y1="122.6" x2="32" y2="122.6" stroke="#2030c0" stroke-width="0.8"/>
<rect x="31" y="119.6" width="1.6" height="1.6" fill="#d0c020"/>
<text x="37.3" y="125.5" font-size="6.7" fill="#000" textLength="80" lengthAdjust="spacingAndGlyphs">Resultierende der Reaktione</text>
<line x1="21.5" y1="127.62" x2="21.5" y2="132.14" stroke="#909090" stroke-width="0.6" stroke-dasharray=".6 .6"/>
<line x1="21.5" y1="132.14" x2="27" y2="132.14" stroke="#909090" stroke-width="0.6" stroke-dasharray=".6 .6"/>
<rect x="29.5" y="128.64" width="5.5" height="4.5" fill="#fff" stroke="#2030a0" stroke-width="0.9"/>
<polygon points="27,135.64 29,132.14 34,132.14 32.5,135.64" fill="#705030"/>
<text x="37.3" y="134.54" font-size="6.7" fill="#000" textLength="50.5" lengthAdjust="spacingAndGlyphs">Fundamenttabelle</text>
<line x1="21.5" y1="136.66" x2="21.5" y2="141.18" stroke="#909090" stroke-width="0.6" stroke-dasharray=".6 .6"/>
<line x1="21.5" y1="141.18" x2="27" y2="141.18" stroke="#909090" stroke-width="0.6" stroke-dasharray=".6 .6"/>
<line x1="30" y1="144.68" x2="30" y2="139.18" stroke="#2030c0" stroke-width="1"/>
<line x1="28" y1="140.68" x2="32" y2="140.68" stroke="#2030c0" stroke-width="0.8"/>
<rect x="31" y="137.68" width="1.6" height="1.6" fill="#d0c020"/>
<text x="37.3" y="143.58" font-size="6.7" fill="#000" textLength="80" lengthAdjust="spacingAndGlyphs">Knotenauflager-Resultierenc</text>
<line x1="12.2" y1="150.22" x2="17" y2="150.22" stroke="#909090" stroke-width="0.6" stroke-dasharray=".6 .6"/>
<rect x="10" y="148.02" width="4.4" height="4.4" fill="#fff" stroke="#808080" stroke-width="0.6"/>
<line x1="11" y1="150.22" x2="13.4" y2="150.22" stroke="#000" stroke-width="0.6"/>
<rect x="17" y="149.02" width="9" height="2.4" fill="#a0a020" stroke="#505010" stroke-width="0.5"/>
<text x="28" y="152.62" font-size="6.7" fill="#000" textLength="16" lengthAdjust="spacingAndGlyphs">Stäbe</text>
<line x1="21.5" y1="154.74" x2="21.5" y2="159.26" stroke="#909090" stroke-width="0.6" stroke-dasharray=".6 .6"/>
<line x1="21.5" y1="159.26" x2="27" y2="159.26" stroke="#909090" stroke-width="0.6" stroke-dasharray=".6 .6"/>
<polyline points="28,162.26 28,157.26 34,157.26 34,162.26" fill="none" stroke="#303030" stroke-width="0.9"/>
<path d="M28,157.26 q3,2.6 6,0" fill="none" stroke="#c02020" stroke-width="1"/>
<text x="37.3" y="161.66" font-size="6.7" fill="#000" textLength="52" lengthAdjust="spacingAndGlyphs">Stabschnittgrößen</text>
<line x1="21.5" y1="163.78" x2="21.5" y2="168.3" stroke="#909090" stroke-width="0.6" stroke-dasharray=".6 .6"/>
<line x1="21.5" y1="168.3" x2="27" y2="168.3" stroke="#909090" stroke-width="0.6" stroke-dasharray=".6 .6"/>
<polyline points="28,171.3 28,166.3 34,166.3 34,171.3" fill="none" stroke="#303030" stroke-width="0.9"/>
<path d="M28,166.3 q3,2.6 6,0" fill="none" stroke="#208020" stroke-width="1"/>
<line x1="27.4" y1="168.8" x2="29.5" y2="165.3" stroke="#2030c0" stroke-width="1"/>
<text x="37.3" y="170.7" font-size="6.7" fill="#000" textLength="52.5" lengthAdjust="spacingAndGlyphs">Stabverformungen</text>
<line x1="21.5" y1="172.82" x2="21.5" y2="177.34" stroke="#909090" stroke-width="0.6" stroke-dasharray=".6 .6"/>
<line x1="21.5" y1="177.34" x2="27" y2="177.34" stroke="#909090" stroke-width="0.6" stroke-dasharray=".6 .6"/>
<path d="M27,175.84 h8 M28,176.34 q3,4 6,0" fill="none" stroke="#206020" stroke-width=".9"/>
<text x="37.3" y="179.74" font-size="6.7" fill="#000" textLength="52" lengthAdjust="spacingAndGlyphs">Relativverformung</text>
<line x1="21.5" y1="181.86" x2="21.5" y2="186.38" stroke="#909090" stroke-width="0.6" stroke-dasharray=".6 .6"/>
<line x1="21.5" y1="186.38" x2="27" y2="186.38" stroke="#909090" stroke-width="0.6" stroke-dasharray=".6 .6"/>
<polygon points="27.5,189.38 27.5,183.38 30,183.38 30,186.38 35,187.38 35,189.38" fill="#208080" stroke="#103030" stroke-width="0.5"/>
<text x="37.3" y="188.78" font-size="6.7" fill="#000" textLength="47.5" lengthAdjust="spacingAndGlyphs">Stabspannungen</text>
<line x1="21.5" y1="190.9" x2="21.5" y2="195.42" stroke="#909090" stroke-width="0.6" stroke-dasharray=".6 .6"/>
<line x1="21.5" y1="195.42" x2="27" y2="195.42" stroke="#909090" stroke-width="0.6" stroke-dasharray=".6 .6"/>
<rect x="30" y="191.92" width="2" height="7" fill="#fff" stroke="#c02020" stroke-width="0.8"/>
<line x1="27.5" y1="195.42" x2="34.5" y2="195.42" stroke="#2030c0" stroke-width="1"/>
<text x="37.3" y="197.82" font-size="6.7" fill="#000" textLength="45" lengthAdjust="spacingAndGlyphs">Schubspannung</text>
<line x1="21.5" y1="199.94" x2="21.5" y2="204.46" stroke="#909090" stroke-width="0.6" stroke-dasharray=".6 .6"/>
<line x1="21.5" y1="204.46" x2="27" y2="204.46" stroke="#909090" stroke-width="0.6" stroke-dasharray=".6 .6"/>
<line x1="29" y1="200.96" x2="29" y2="207.96" stroke="#20a0c0" stroke-width="1.2"/>
<rect x="31" y="201.46" width="2.6" height="2.2" fill="#d03030"/>
<rect x="30.5" y="204.96" width="2.2" height="2" fill="#30a030"/>
<text x="37.3" y="206.86" font-size="6.7" fill="#000" textLength="39.5" lengthAdjust="spacingAndGlyphs">Verbindungen</text>
<line x1="21.5" y1="208.98" x2="21.5" y2="213.5" stroke="#909090" stroke-width="0.6" stroke-dasharray=".6 .6"/>
<line x1="21.5" y1="213.5" x2="27" y2="213.5" stroke="#909090" stroke-width="0.6" stroke-dasharray=".6 .6"/>
<line x1="29" y1="210" x2="29" y2="217" stroke="#20a0c0" stroke-width="1.2"/>
<rect x="31" y="210.5" width="2.6" height="2.2" fill="#d03030"/>
<rect x="30.5" y="214" width="2.2" height="2" fill="#30a030"/>
<text x="37.3" y="215.9" font-size="6.7" fill="#000" textLength="52" lengthAdjust="spacingAndGlyphs">Verbindungskräfte</text>
<line x1="12.2" y1="222.54" x2="17" y2="222.54" stroke="#909090" stroke-width="0.6" stroke-dasharray=".6 .6"/>
<rect x="10" y="220.34" width="4.4" height="4.4" fill="#fff" stroke="#808080" stroke-width="0.6"/>
<line x1="11" y1="222.54" x2="13.4" y2="222.54" stroke="#000" stroke-width="0.6"/>
<polygon points="17,224.54 20,220.54 26,220.54 23,224.54" fill="#e0d840" stroke="#505010" stroke-width="0.7"/>
<text x="28" y="224.94" font-size="6.7" fill="#000" textLength="24" lengthAdjust="spacingAndGlyphs">2D-Teile</text>
<line x1="21.5" y1="227.06" x2="21.5" y2="231.58" stroke="#909090" stroke-width="0.6" stroke-dasharray=".6 .6"/>
<line x1="21.5" y1="231.58" x2="27" y2="231.58" stroke="#909090" stroke-width="0.6" stroke-dasharray=".6 .6"/>
<rect x="27.2" y="227.78" width="7.6" height="7.6" fill="#30c8d8"/>
<circle cx="31" cy="231.58" r="2.7" fill="#e8d820"/>
<circle cx="31" cy="231.58" r="1.3" fill="#e02020"/>
<text x="37.3" y="233.98" font-size="6.7" fill="#000" textLength="41" lengthAdjust="spacingAndGlyphs">Verformungen</text>
<line x1="21.5" y1="236.1" x2="21.5" y2="240.62" stroke="#909090" stroke-width="0.6" stroke-dasharray=".6 .6"/>
<line x1="21.5" y1="240.62" x2="27" y2="240.62" stroke="#909090" stroke-width="0.6" stroke-dasharray=".6 .6"/>
<rect x="27.2" y="236.82" width="7.6" height="7.6" fill="#30c8d8"/>
<circle cx="31" cy="240.62" r="2.7" fill="#e8d820"/>
<circle cx="31" cy="240.62" r="1.3" fill="#e02020"/>
<text x="37.3" y="243.02" font-size="6.7" fill="#000" textLength="39.5" lengthAdjust="spacingAndGlyphs">Schnittgrößen</text>
<line x1="21.5" y1="245.14" x2="21.5" y2="249.66" stroke="#909090" stroke-width="0.6" stroke-dasharray=".6 .6"/>
<line x1="21.5" y1="249.66" x2="27" y2="249.66" stroke="#909090" stroke-width="0.6" stroke-dasharray=".6 .6"/>
<rect x="27.2" y="245.86" width="7.6" height="7.6" fill="#30c8d8"/>
<circle cx="31" cy="249.66" r="2.7" fill="#e8d820"/>
<circle cx="31" cy="249.66" r="1.3" fill="#e02020"/>
<text x="37.3" y="252.06" font-size="6.7" fill="#000" textLength="35.5" lengthAdjust="spacingAndGlyphs">Spannungen</text>
<line x1="21.5" y1="254.18" x2="21.5" y2="258.7" stroke="#909090" stroke-width="0.6" stroke-dasharray=".6 .6"/>
<line x1="21.5" y1="258.7" x2="27" y2="258.7" stroke="#909090" stroke-width="0.6" stroke-dasharray=".6 .6"/>
<line x1="27" y1="260.2" x2="35" y2="260.2" stroke="#2030c0" stroke-width="0.9"/>
<path d="M30,260.2 q1,-6 4,-3.5" fill="none" stroke="#a0a020" stroke-width="1.2"/>
<text x="37.3" y="261.1" font-size="6.7" fill="#000" textLength="60" lengthAdjust="spacingAndGlyphs">Schnitt durch 2D-Teil</text>
<line x1="21.5" y1="263.22" x2="21.5" y2="267.74" stroke="#909090" stroke-width="0.6" stroke-dasharray=".6 .6"/>
<line x1="21.5" y1="267.74" x2="27" y2="267.74" stroke="#909090" stroke-width="0.6" stroke-dasharray=".6 .6"/>
<ellipse cx="31" cy="267.74" rx="4" ry="3" fill="#e0b020" stroke="#604010" stroke-width=".7"/>
<circle cx="31" cy="267.74" r="1.2" fill="#c03020"/>
<text x="37.3" y="270.14" font-size="6.7" fill="#000" textLength="55.5" lengthAdjust="spacingAndGlyphs">Integrationsstreifen</text>
<line x1="21.5" y1="272.26" x2="21.5" y2="276.78" stroke="#909090" stroke-width="0.6" stroke-dasharray=".6 .6"/>
<line x1="21.5" y1="276.78" x2="27" y2="276.78" stroke="#909090" stroke-width="0.6" stroke-dasharray=".6 .6"/>
<rect x="27.2" y="273.18" width="7.6" height="2.4" fill="#30a030"/>
<rect x="27.2" y="275.58" width="7.6" height="2.4" fill="#e0d020"/>
<rect x="27.2" y="277.98" width="7.6" height="2.4" fill="#2040d0"/>
<text x="37.3" y="279.18" font-size="6.7" fill="#000" textLength="54" lengthAdjust="spacingAndGlyphs">Verteilungsstreifen</text>
<line x1="12.2" y1="285.82" x2="17" y2="285.82" stroke="#909090" stroke-width="0.6" stroke-dasharray=".6 .6"/>
<rect x="18" y="282.32" width="7" height="2" fill="#c02020"/>
<rect x="18" y="287.82" width="7" height="1.6" fill="#2030c0"/>
<circle cx="21.5" cy="285.82" r="1.6" fill="#c02020"/>
<text x="28" y="288.22" font-size="6.7" fill="#000" textLength="46.5" lengthAdjust="spacingAndGlyphs">2D-/1D-Upgrade</text>
<line x1="12.2" y1="294.86" x2="17" y2="294.86" stroke="#909090" stroke-width="0.6" stroke-dasharray=".6 .6"/>
<rect x="17.7" y="291.66" width="7.6" height="6.4" fill="#fff" stroke="#2030a0" stroke-width="0.9"/>
<line x1="17.7" y1="293.06" x2="25.3" y2="293.06" stroke="#2030a0" stroke-width="0.9"/>
<text x="28" y="297.26" font-size="6.7" fill="#000" textLength="34.5" lengthAdjust="spacingAndGlyphs">Materialliste</text>
<line x1="12.2" y1="303.9" x2="17" y2="303.9" stroke="#909090" stroke-width="0.6" stroke-dasharray=".6 .6"/>
<rect x="19" y="300.4" width="6" height="6" fill="#fff" stroke="#2030a0" stroke-width="0.8"/>
<polygon points="17.5,307.4 18.5,304.4 20.5,307.4" fill="#c02020"/>
<line x1="17.5" y1="307.4" x2="22.5" y2="307.4" stroke="#c02020" stroke-width="0.9"/>
<text x="28" y="306.3" font-size="6.7" fill="#000" textLength="45.5" lengthAdjust="spacingAndGlyphs">Rechenprotokoll</text>
<rect x="6.4" y="524" width="111" height="10" fill="#e8e6e1"/>
<rect x="6.6" y="524.2" width="9.2" height="9.6" fill="#d4d0c8"/>
<line x1="6.6" y1="524.7" x2="15.8" y2="524.7" stroke="#ffffff" stroke-width="1"/>
<line x1="7.1" y1="524.2" x2="7.1" y2="533.8" stroke="#ffffff" stroke-width="1"/>
<line x1="6.6" y1="533.3" x2="15.8" y2="533.3" stroke="#808080" stroke-width="1"/>
<line x1="15.3" y1="524.2" x2="15.3" y2="533.8" stroke="#808080" stroke-width="1"/>
<polygon points="11.75,527.1 11.75,530.9 9.85,529" fill="#000"/>
<rect x="16" y="524.2" width="86.4" height="9.6" fill="#d4d0c8"/>
<line x1="16" y1="524.7" x2="102.4" y2="524.7" stroke="#ffffff" stroke-width="1"/>
<line x1="16.5" y1="524.2" x2="16.5" y2="533.8" stroke="#ffffff" stroke-width="1"/>
<line x1="16" y1="533.3" x2="102.4" y2="533.3" stroke="#808080" stroke-width="1"/>
<line x1="101.9" y1="524.2" x2="101.9" y2="533.8" stroke="#808080" stroke-width="1"/>
<line x1="5.2" y1="534.2" x2="118" y2="534.2" stroke="#707070" stroke-width="0.8"/>
<rect x="107.4" y="524.2" width="9.6" height="9.6" fill="#d4d0c8"/>
<line x1="107.4" y1="524.7" x2="117" y2="524.7" stroke="#ffffff" stroke-width="1"/>
<line x1="107.9" y1="524.2" x2="107.9" y2="533.8" stroke="#ffffff" stroke-width="1"/>
<line x1="107.4" y1="533.3" x2="117" y2="533.3" stroke="#808080" stroke-width="1"/>
<line x1="116.5" y1="524.2" x2="116.5" y2="533.8" stroke="#808080" stroke-width="1"/>
<polygon points="111.45,527.1 111.45,530.9 113.35,529" fill="#000"/>
<rect x="5.5" y="538" width="40.8" height="12.2" fill="#d4d0c8"/>
<line x1="5.5" y1="538.5" x2="46.3" y2="538.5" stroke="#ffffff" stroke-width="1"/>
<line x1="6" y1="538" x2="6" y2="550.2" stroke="#ffffff" stroke-width="1"/>
<line x1="5.5" y1="549.7" x2="46.3" y2="549.7" stroke="#404040" stroke-width="1"/>
<line x1="45.8" y1="538" x2="45.8" y2="550.2" stroke="#404040" stroke-width="1"/>
<line x1="6.5" y1="548.9" x2="45.3" y2="548.9" stroke="#808080" stroke-width="0.7"/>
<line x1="45" y1="539" x2="45" y2="549.2" stroke="#808080" stroke-width="0.7"/>
<text x="26" y="547" font-size="6.7" fill="#fff" text-anchor="middle">Neu</text>
<text x="25.6" y="546.6" font-size="6.7" fill="#a09c94" text-anchor="middle">Neu</text>
<rect x="48" y="538" width="41.6" height="12.2" fill="#d4d0c8"/>
<line x1="48" y1="538.5" x2="89.6" y2="538.5" stroke="#ffffff" stroke-width="1"/>
<line x1="48.5" y1="538" x2="48.5" y2="550.2" stroke="#ffffff" stroke-width="1"/>
<line x1="48" y1="549.7" x2="89.6" y2="549.7" stroke="#404040" stroke-width="1"/>
<line x1="89.1" y1="538" x2="89.1" y2="550.2" stroke="#404040" stroke-width="1"/>
<line x1="49" y1="548.9" x2="88.6" y2="548.9" stroke="#808080" stroke-width="0.7"/>
<line x1="88.3" y1="539" x2="88.3" y2="549.2" stroke="#808080" stroke-width="0.7"/>
<text x="68.8" y="546.8" font-size="6.7" fill="#000" textLength="27" lengthAdjust="spacingAndGlyphs" text-anchor="middle">Schließen</text>
<line x1="0" y1="552" x2="121" y2="552" stroke="#707070" stroke-width="0.9"/>
<line x1="0" y1="552.9" x2="122" y2="552.9" stroke="#fff" stroke-width="0.6"/>
<polygon points="4.5,552.6 17.5,552.6 17.5,561 16.5,562.3 5.5,562.3 4.5,561" fill="#d4d0c8" stroke="#606060" stroke-width="0.7"/>
<line x1="5" y1="552.6" x2="17" y2="552.6" stroke="#d4d0c8" stroke-width="1.4"/>
<rect x="7.5" y="555.5" width="2.4" height="2.2" fill="#20a0a0"/>
<rect x="10.5" y="557.8" width="2.6" height="2.4" fill="#d02020"/>
<line x1="8.5" y1="557.5" x2="8.5" y2="560" stroke="#404040" stroke-width="0.6"/>
<line x1="8.5" y1="559" x2="10.5" y2="559" stroke="#404040" stroke-width="0.6"/>
<polygon points="17.5,553.4 31.5,553.4 31.5,561 30.5,562.3 18.5,562.3 17.5,561" fill="#ebe9e4" stroke="#606060" stroke-width="0.7"/>
<rect x="20.5" y="556" width="5.6" height="4.8" fill="#fff" stroke="#2030a0" stroke-width="0.9"/>
<line x1="20.5" y1="556.6" x2="26.1" y2="556.6" stroke="#2030a0" stroke-width="1.2"/>
<rect x="847.5" y="53" width="112.5" height="512" fill="#d4d0c8"/>
<rect x="848.8" y="53.3" width="111.2" height="10.6" fill="#0a246a"/>
<text x="851.3" y="61.3" font-size="6.9" fill="#fff" textLength="40" lengthAdjust="spacingAndGlyphs">Eigenschaften</text>
<path d="M944,59.4 v-3 h2.6 v3 M946.2,56.6 v2.8 M942.8,59.5 h5 M945.2,59.6 v2.4" fill="none" stroke="#fff" stroke-width=".8"/>
<line x1="952.6" y1="56" x2="957.2" y2="61" stroke="#fff" stroke-width="1.2"/>
<line x1="957.2" y1="56" x2="952.6" y2="61" stroke="#fff" stroke-width="1.2"/>
<rect x="850.5" y="65.6" width="69" height="10.8" fill="#fff"/>
<line x1="850.5" y1="66.1" x2="919.5" y2="66.1" stroke="#808080" stroke-width="1"/>
<line x1="851" y1="65.6" x2="851" y2="76.4" stroke="#808080" stroke-width="1"/>
<line x1="850.5" y1="75.9" x2="919.5" y2="75.9" stroke="#ffffff" stroke-width="1"/>
<line x1="919" y1="65.6" x2="919" y2="76.4" stroke="#ffffff" stroke-width="1"/>
<text x="852.5" y="73.8" font-size="6.8" fill="#000" textLength="43.5" lengthAdjust="spacingAndGlyphs">Reaktionen (1)</text>
<rect x="910" y="66.4" width="8.8" height="9.4" fill="#d4d0c8"/>
<line x1="910" y1="66.9" x2="918.8" y2="66.9" stroke="#ffffff" stroke-width="1"/>
<line x1="910.5" y1="66.4" x2="910.5" y2="75.8" stroke="#ffffff" stroke-width="1"/>
<line x1="910" y1="75.3" x2="918.8" y2="75.3" stroke="#808080" stroke-width="1"/>
<line x1="918.3" y1="66.4" x2="918.3" y2="75.8" stroke="#808080" stroke-width="1"/>
<polygon points="912.7,70.45 916.1,70.45 914.4,72.15" fill="#000"/>
<polyline points="923.5,68.5 925.5,74 929,74 929,69.5 926.5,69.5" fill="none" stroke="#202020" stroke-width="0.9"/>
<rect x="926.8" y="70.8" width="2.2" height="3.2" fill="#e8e0a0" stroke="#202020" stroke-width="0.5"/>
<polyline points="934.5,68.3 940.2,68.3 937.5,72.2 937.5,75" fill="none" stroke="#202020" stroke-width="0.9"/>
<line x1="934.5" y1="68.3" x2="937.5" y2="72.2" stroke="#202020" stroke-width="0.9"/>
<circle cx="940.6" cy="72.6" r="1.5" fill="#e8e020"/>
<line x1="947.5" y1="74.5" x2="950.6" y2="68.3" stroke="#b0aca4" stroke-width="1.2"/>
<g transform="translate(938.3 83) scale(1.4 1)"><path d="M0,0 L-3.1,0 A3.1,3.1 0 0 1 -1,-2.95 Z" fill="#30d030"/><path d="M0,0 L-1,-2.95 A3.1,3.1 0 0 1 1.6,-2.65 Z" fill="#3040f0"/><path d="M0,0 L1.6,-2.65 A3.1,3.1 0 0 1 3.1,.4 Z" fill="#20d0e8"/><path d="M0,0 L3.1,.4 A3.1,3.1 0 0 1 -.4,3.08 Z" fill="#f0e820"/><path d="M0,0 L-.4,3.08 A3.1,3.1 0 0 1 -3.1,0 Z" fill="#f020e0"/></g>
<ellipse cx="949.4" cy="82.8" rx="4" ry="2.6" fill="#78c8c0"/>
<circle cx="949.6" cy="82.4" r="1.2" fill="#d05858"/>
<rect x="849" y="91.6" width="109.6" height="441" fill="#fff"/>
<rect x="849" y="91.6" width="109.6" height="439.9" fill="#fff"/>
<line x1="849.4" y1="91.6" x2="849.4" y2="531.5" stroke="#606060" stroke-width="0.8"/>
<line x1="849" y1="91.9" x2="958.6" y2="91.9" stroke="#606060" stroke-width="0.7"/>
<rect x="849.8" y="92.2" width="45.5" height="9.36" fill="#808080"/>
<text x="853" y="99.3" font-size="6.8" fill="#a8a8a8" textLength="16.5" lengthAdjust="spacingAndGlyphs">Name</text>
<line x1="849" y1="101.55" x2="958.6" y2="101.55" stroke="#c8c8c8" stroke-width="0.6"/>
<text x="897.3" y="99.1" font-size="6.8" fill="#000" textLength="33" lengthAdjust="spacingAndGlyphs">Reaktionen</text>
<text x="852.4" y="109.25" font-size="6.8" fill="#000" textLength="25" lengthAdjust="spacingAndGlyphs">Auswahl</text>
<line x1="849" y1="111.51" x2="958.6" y2="111.51" stroke="#c8c8c8" stroke-width="0.6"/>
<text x="897.3" y="109.05" font-size="6.8" fill="#000" textLength="10.8" lengthAdjust="spacingAndGlyphs">Alle</text>
<rect x="951.2" y="102.35" width="7.4" height="8.96" fill="#d4d0c8"/>
<line x1="951.2" y1="102.85" x2="958.6" y2="102.85" stroke="#ffffff" stroke-width="1"/>
<line x1="951.7" y1="102.35" x2="951.7" y2="111.31" stroke="#ffffff" stroke-width="1"/>
<line x1="951.2" y1="110.81" x2="958.6" y2="110.81" stroke="#808080" stroke-width="1"/>
<line x1="958.1" y1="102.35" x2="958.1" y2="111.31" stroke="#808080" stroke-width="1"/>
<polygon points="953.2,106.18 956.6,106.18 954.9,107.88" fill="#000"/>
<text x="852.4" y="119.21" font-size="6.8" fill="#000" textLength="22.5" lengthAdjust="spacingAndGlyphs">Lasttyp</text>
<line x1="849" y1="121.46" x2="958.6" y2="121.46" stroke="#c8c8c8" stroke-width="0.6"/>
<text x="897.3" y="119.01" font-size="6.8" fill="#000" textLength="33.5" lengthAdjust="spacingAndGlyphs">LFK-Klasse</text>
<rect x="951.2" y="112.31" width="7.4" height="8.96" fill="#d4d0c8"/>
<line x1="951.2" y1="112.81" x2="958.6" y2="112.81" stroke="#ffffff" stroke-width="1"/>
<line x1="951.7" y1="112.31" x2="951.7" y2="121.26" stroke="#ffffff" stroke-width="1"/>
<line x1="951.2" y1="120.76" x2="958.6" y2="120.76" stroke="#808080" stroke-width="1"/>
<line x1="958.1" y1="112.31" x2="958.1" y2="121.26" stroke="#808080" stroke-width="1"/>
<polygon points="953.2,116.14 956.6,116.14 954.9,117.84" fill="#000"/>
<text x="852.4" y="129.16" font-size="6.8" fill="#000" textLength="33.5" lengthAdjust="spacingAndGlyphs">LFK-Klasse</text>
<line x1="849" y1="131.42" x2="958.6" y2="131.42" stroke="#c8c8c8" stroke-width="0.6"/>
<text x="897.3" y="128.97" font-size="6.8" fill="#000" textLength="42.5" lengthAdjust="spacingAndGlyphs">RC2.4 Rampe-</text>
<rect x="942.6" y="122.06" width="16" height="9.15" fill="#fff"/>
<rect x="943" y="122.27" width="7.4" height="8.96" fill="#d4d0c8"/>
<line x1="943" y1="122.77" x2="950.4" y2="122.77" stroke="#ffffff" stroke-width="1"/>
<line x1="943.5" y1="122.27" x2="943.5" y2="131.22" stroke="#ffffff" stroke-width="1"/>
<line x1="943" y1="130.72" x2="950.4" y2="130.72" stroke="#808080" stroke-width="1"/>
<line x1="949.9" y1="122.27" x2="949.9" y2="131.22" stroke="#808080" stroke-width="1"/>
<polygon points="945,126.09 948.4,126.09 946.7,127.79" fill="#000"/>
<rect x="951" y="122.27" width="7.6" height="8.96" fill="#d4d0c8"/>
<line x1="951" y1="122.77" x2="958.6" y2="122.77" stroke="#ffffff" stroke-width="1"/>
<line x1="951.5" y1="122.27" x2="951.5" y2="131.22" stroke="#ffffff" stroke-width="1"/>
<line x1="951" y1="130.72" x2="958.6" y2="130.72" stroke="#808080" stroke-width="1"/>
<line x1="958.1" y1="122.27" x2="958.1" y2="131.22" stroke="#808080" stroke-width="1"/>
<text x="954.8" y="128.87" font-size="6" fill="#000" text-anchor="middle">...</text>
<text x="852.4" y="139.12" font-size="6.8" fill="#000" textLength="15.5" lengthAdjust="spacingAndGlyphs">Filter</text>
<line x1="849" y1="141.38" x2="958.6" y2="141.38" stroke="#c8c8c8" stroke-width="0.6"/>
<text x="897.3" y="138.92" font-size="6.8" fill="#000" textLength="13.5" lengthAdjust="spacingAndGlyphs">Nein</text>
<rect x="951.2" y="132.22" width="7.4" height="8.96" fill="#d4d0c8"/>
<line x1="951.2" y1="132.72" x2="958.6" y2="132.72" stroke="#ffffff" stroke-width="1"/>
<line x1="951.7" y1="132.22" x2="951.7" y2="141.18" stroke="#ffffff" stroke-width="1"/>
<line x1="951.2" y1="140.68" x2="958.6" y2="140.68" stroke="#808080" stroke-width="1"/>
<line x1="958.1" y1="132.22" x2="958.1" y2="141.18" stroke="#808080" stroke-width="1"/>
<polygon points="953.2,136.05 956.6,136.05 954.9,137.75" fill="#000"/>
<text x="852.4" y="149.07" font-size="6.8" fill="#000" textLength="18.5" lengthAdjust="spacingAndGlyphs">Werte</text>
<line x1="849" y1="151.33" x2="958.6" y2="151.33" stroke="#c8c8c8" stroke-width="0.6"/>
<text x="897.3" y="148.88" font-size="6.8" fill="#000" textLength="51.5" lengthAdjust="spacingAndGlyphs">Mehrere Kompon</text>
<rect x="951.2" y="142.18" width="7.4" height="8.96" fill="#d4d0c8"/>
<line x1="951.2" y1="142.68" x2="958.6" y2="142.68" stroke="#ffffff" stroke-width="1"/>
<line x1="951.7" y1="142.18" x2="951.7" y2="151.13" stroke="#ffffff" stroke-width="1"/>
<line x1="951.2" y1="150.63" x2="958.6" y2="150.63" stroke="#808080" stroke-width="1"/>
<line x1="958.1" y1="142.18" x2="958.1" y2="151.13" stroke="#808080" stroke-width="1"/>
<polygon points="953.2,146 956.6,146 954.9,147.7" fill="#000"/>
<text x="852.4" y="159.03" font-size="6.8" fill="#000" textLength="7.5" lengthAdjust="spacingAndGlyphs">Rx</text>
<line x1="849" y1="161.28" x2="958.6" y2="161.28" stroke="#c8c8c8" stroke-width="0.6"/>
<rect x="897.9" y="154.53" width="3.2" height="3.2" fill="#fff" stroke="#404040" stroke-width="0.7"/>
<line x1="897.9" y1="154.53" x2="901.1" y2="157.73" stroke="#202020" stroke-width="0.7"/>
<line x1="901.1" y1="154.53" x2="897.9" y2="157.73" stroke="#202020" stroke-width="0.7"/>
<text x="852.4" y="168.98" font-size="6.8" fill="#000" textLength="7.5" lengthAdjust="spacingAndGlyphs">Ry</text>
<line x1="849" y1="171.24" x2="958.6" y2="171.24" stroke="#c8c8c8" stroke-width="0.6"/>
<rect x="897.9" y="164.48" width="3.2" height="3.2" fill="#fff" stroke="#404040" stroke-width="0.7"/>
<text x="852.4" y="178.94" font-size="6.8" fill="#000" textLength="7.5" lengthAdjust="spacingAndGlyphs">Rz</text>
<line x1="849" y1="181.2" x2="958.6" y2="181.2" stroke="#c8c8c8" stroke-width="0.6"/>
<rect x="897.9" y="174.44" width="3.2" height="3.2" fill="#fff" stroke="#404040" stroke-width="0.7"/>
<text x="852.4" y="188.89" font-size="6.8" fill="#000" textLength="8.5" lengthAdjust="spacingAndGlyphs">Mx</text>
<line x1="849" y1="191.15" x2="958.6" y2="191.15" stroke="#c8c8c8" stroke-width="0.6"/>
<rect x="897.9" y="184.39" width="3.2" height="3.2" fill="#fff" stroke="#404040" stroke-width="0.7"/>
<text x="852.4" y="198.85" font-size="6.8" fill="#000" textLength="8.5" lengthAdjust="spacingAndGlyphs">My</text>
<line x1="849" y1="201.1" x2="958.6" y2="201.1" stroke="#c8c8c8" stroke-width="0.6"/>
<rect x="897.9" y="194.35" width="3.2" height="3.2" fill="#fff" stroke="#404040" stroke-width="0.7"/>
<text x="852.4" y="208.8" font-size="6.8" fill="#000" textLength="8.5" lengthAdjust="spacingAndGlyphs">Mz</text>
<line x1="849" y1="211.06" x2="958.6" y2="211.06" stroke="#c8c8c8" stroke-width="0.6"/>
<rect x="897.9" y="204.3" width="3.2" height="3.2" fill="#fff" stroke="#404040" stroke-width="0.7"/>
<text x="852.4" y="218.76" font-size="6.8" fill="#000" textLength="36.5" lengthAdjust="spacingAndGlyphs">Extremwerte</text>
<line x1="849" y1="221.02" x2="958.6" y2="221.02" stroke="#c8c8c8" stroke-width="0.6"/>
<text x="897.3" y="218.56" font-size="6.8" fill="#000" textLength="20.5" lengthAdjust="spacingAndGlyphs">Knoten</text>
<rect x="951.2" y="211.86" width="7.4" height="8.96" fill="#d4d0c8"/>
<line x1="951.2" y1="212.36" x2="958.6" y2="212.36" stroke="#ffffff" stroke-width="1"/>
<line x1="951.7" y1="211.86" x2="951.7" y2="220.82" stroke="#ffffff" stroke-width="1"/>
<line x1="951.2" y1="220.32" x2="958.6" y2="220.32" stroke="#808080" stroke-width="1"/>
<line x1="958.1" y1="211.86" x2="958.1" y2="220.82" stroke="#808080" stroke-width="1"/>
<polygon points="953.2,215.69 956.6,215.69 954.9,217.39" fill="#000"/>
<text x="852.4" y="228.71" font-size="6.8" fill="#000" textLength="38.5" lengthAdjust="spacingAndGlyphs">Zeichnen ei...</text>
<line x1="849" y1="230.97" x2="958.6" y2="230.97" stroke="#c8c8c8" stroke-width="0.6"/>
<rect x="951" y="221.81" width="7.6" height="8.96" fill="#d4d0c8"/>
<line x1="951" y1="222.31" x2="958.6" y2="222.31" stroke="#ffffff" stroke-width="1"/>
<line x1="951.5" y1="221.81" x2="951.5" y2="230.77" stroke="#ffffff" stroke-width="1"/>
<line x1="951" y1="230.27" x2="958.6" y2="230.27" stroke="#808080" stroke-width="1"/>
<line x1="958.1" y1="221.81" x2="958.1" y2="230.77" stroke="#808080" stroke-width="1"/>
<text x="954.8" y="228.41" font-size="6" fill="#000" text-anchor="middle">...</text>
<text x="852.4" y="238.67" font-size="6.8" fill="#000" textLength="39.5" lengthAdjust="spacingAndGlyphs">Verdrehte A...</text>
<line x1="849" y1="240.93" x2="958.6" y2="240.93" stroke="#c8c8c8" stroke-width="0.6"/>
<rect x="897.9" y="234.17" width="3.2" height="3.2" fill="#fff" stroke="#404040" stroke-width="0.7"/>
<line x1="895.3" y1="91.6" x2="895.3" y2="240.92" stroke="#c8c8c8" stroke-width="0.6"/>
<line x1="959" y1="91.6" x2="959" y2="531.5" stroke="#fff" stroke-width="0.8"/>
<rect x="848.8" y="532" width="110.4" height="10.6" fill="url(#ge)"/>
<text x="851" y="540.2" font-size="6.8" fill="#fff" textLength="38.5" lengthAdjust="spacingAndGlyphs">Einwirkungen</text>
<rect x="848.8" y="542.8" width="110.4" height="20" fill="#fff"/>
<line x1="848.8" y1="552.8" x2="959" y2="552.8" stroke="#c8c8c8" stroke-width="0.6"/>
<line x1="849.2" y1="532" x2="849.2" y2="563" stroke="#606060" stroke-width="0.8"/>
<text x="852.3" y="550.3" font-size="6.8" fill="#000" textLength="38.5" lengthAdjust="spacingAndGlyphs">Aktualisieren</text>
<text x="852.3" y="560.4" font-size="6.8" fill="#000" textLength="26.5" lengthAdjust="spacingAndGlyphs">Vorschau</text>
<rect x="934.4" y="543.2" width="23" height="9.2" fill="#d4d0c8"/>
<line x1="934.4" y1="543.7" x2="957.4" y2="543.7" stroke="#ffffff" stroke-width="1"/>
<line x1="934.9" y1="543.2" x2="934.9" y2="552.4" stroke="#ffffff" stroke-width="1"/>
<line x1="934.4" y1="551.9" x2="957.4" y2="551.9" stroke="#808080" stroke-width="1"/>
<line x1="956.9" y1="543.2" x2="956.9" y2="552.4" stroke="#808080" stroke-width="1"/>
<text x="945.8" y="550.2" font-size="6.6" fill="#000" textLength="14.5" lengthAdjust="spacingAndGlyphs" text-anchor="middle">&gt;&gt;&gt;</text>
<rect x="934.4" y="553.3" width="23" height="9.2" fill="#d4d0c8"/>
<line x1="934.4" y1="553.8" x2="957.4" y2="553.8" stroke="#ffffff" stroke-width="1"/>
<line x1="934.9" y1="553.3" x2="934.9" y2="562.5" stroke="#ffffff" stroke-width="1"/>
<line x1="934.4" y1="562" x2="957.4" y2="562" stroke="#808080" stroke-width="1"/>
<line x1="956.9" y1="553.3" x2="956.9" y2="562.5" stroke="#808080" stroke-width="1"/>
<text x="945.8" y="560.3" font-size="6.6" fill="#000" textLength="14.5" lengthAdjust="spacingAndGlyphs" text-anchor="middle">&gt;&gt;&gt;</text>
<line x1="848.8" y1="563" x2="959" y2="563" stroke="#606060" stroke-width="0.7"/>
<rect x="836.3" y="53.5" width="11" height="379" fill="#ebe9e4"/>
<rect x="836.6" y="53.8" width="10.4" height="10.4" fill="#d4d0c8"/>
<line x1="836.6" y1="54.3" x2="847" y2="54.3" stroke="#ffffff" stroke-width="1"/>
<line x1="837.1" y1="53.8" x2="837.1" y2="64.2" stroke="#ffffff" stroke-width="1"/>
<line x1="836.6" y1="63.7" x2="847" y2="63.7" stroke="#808080" stroke-width="1"/>
<line x1="846.5" y1="53.8" x2="846.5" y2="64.2" stroke="#808080" stroke-width="1"/>
<polygon points="839.9,59.95 843.7,59.95 841.8,58.05" fill="#000"/>
<rect x="836.6" y="166.4" width="10.4" height="9" fill="#d4d0c8"/>
<line x1="836.6" y1="166.9" x2="847" y2="166.9" stroke="#ffffff" stroke-width="1"/>
<line x1="837.1" y1="166.4" x2="837.1" y2="175.4" stroke="#ffffff" stroke-width="1"/>
<line x1="836.6" y1="174.9" x2="847" y2="174.9" stroke="#808080" stroke-width="1"/>
<line x1="846.5" y1="166.4" x2="846.5" y2="175.4" stroke="#808080" stroke-width="1"/>
<rect x="836.6" y="420.6" width="10.4" height="10.2" fill="#d4d0c8"/>
<line x1="836.6" y1="421.1" x2="847" y2="421.1" stroke="#ffffff" stroke-width="1"/>
<line x1="837.1" y1="420.6" x2="837.1" y2="430.8" stroke="#ffffff" stroke-width="1"/>
<line x1="836.6" y1="430.3" x2="847" y2="430.3" stroke="#808080" stroke-width="1"/>
<line x1="846.5" y1="420.6" x2="846.5" y2="430.8" stroke="#808080" stroke-width="1"/>
<polygon points="839.9,425.05 843.7,425.05 841.8,426.95" fill="#000"/>
<rect x="836.3" y="431.6" width="11" height="77.4" fill="#bdb9b1"/>
<rect x="837.2" y="433" width="8.8" height="75.6" fill="url(#gdv)" stroke="#1c1c1c" stroke-width="0.8"/>
<line x1="123.4" y1="53.4" x2="847" y2="53.4" stroke="#808080" stroke-width="0.8"/>
<line x1="123.6" y1="53" x2="123.6" y2="521" stroke="#808080" stroke-width="0.8"/>
<rect x="124" y="508.8" width="712.5" height="12.6" fill="#d4d0c8"/>
<g transform="translate(130 514.4) scale(.8) translate(-4.8 -5.2)">
<ellipse cx="4.5" cy="5" rx="3.2" ry="2.4" fill="#c8c8c8" stroke="#202020" stroke-width=".8" transform="rotate(-30 4.5 5)"/>
</g>
<g transform="translate(140.4 514.4) scale(.8) translate(-4.8 -5.2)">
<ellipse cx="4.5" cy="5" rx="3.2" ry="2.4" fill="#e0d840" stroke="#202020" stroke-width=".8" transform="rotate(-30 4.5 5)"/>
</g>
<rect x="148.1" y="509.4" width="10.4" height="10.6" fill="#eeece8"/>
<line x1="148.1" y1="509.6" x2="158.5" y2="509.6" stroke="#909088" stroke-width="0.5"/>
<line x1="148.3" y1="509.4" x2="148.3" y2="520" stroke="#909088" stroke-width="0.5"/>
<line x1="158.4" y1="509.4" x2="158.4" y2="520" stroke="#fff" stroke-width="0.5"/>
<g transform="translate(153.3 514.4) scale(.8) translate(-4.8 -5.2)">
<polygon points="4.5,1.5 7,6 2,6" fill="#e8e8a0" stroke="#2838b0" stroke-width="0.8"/>
<line x1="1" y1="8" x2="8" y2="8" stroke="#2838b0" stroke-width="1.2"/>
</g>
<rect x="158.6" y="509.4" width="10.4" height="10.6" fill="#eeece8"/>
<line x1="158.6" y1="509.6" x2="169" y2="509.6" stroke="#909088" stroke-width="0.5"/>
<line x1="158.8" y1="509.4" x2="158.8" y2="520" stroke="#909088" stroke-width="0.5"/>
<line x1="168.9" y1="509.4" x2="168.9" y2="520" stroke="#fff" stroke-width="0.5"/>
<g transform="translate(163.8 514.4) scale(.8) translate(-4.8 -5.2)">
<polyline points="1,2 1,8 8.5,8" fill="none" stroke="#2838b0" stroke-width="1"/>
<polygon points="3,8 5,4 7,8" fill="#a0a8e0" stroke="#2838b0" stroke-width="0.6"/>
</g>
<rect x="169.8" y="509.4" width="10.4" height="10.6" fill="#eeece8"/>
<line x1="169.8" y1="509.6" x2="180.2" y2="509.6" stroke="#909088" stroke-width="0.5"/>
<line x1="170" y1="509.4" x2="170" y2="520" stroke="#909088" stroke-width="0.5"/>
<line x1="180.1" y1="509.4" x2="180.1" y2="520" stroke="#fff" stroke-width="0.5"/>
<g transform="translate(175 514.4) scale(.8) translate(-4.8 -5.2)">
<polyline points="1.5,9 1.5,2 8,2 8,5 1.5,5" fill="none" stroke="#c02020" stroke-width="1"/>
</g>
<rect x="182.7" y="509.4" width="10.4" height="10.6" fill="#eeece8"/>
<line x1="182.7" y1="509.6" x2="193.1" y2="509.6" stroke="#909088" stroke-width="0.5"/>
<line x1="182.9" y1="509.4" x2="182.9" y2="520" stroke="#909088" stroke-width="0.5"/>
<line x1="193" y1="509.4" x2="193" y2="520" stroke="#fff" stroke-width="0.5"/>
<g transform="translate(187.9 514.4) scale(.8) translate(-4.8 -5.2)">
<line x1="1" y1="3" x2="8.5" y2="3" stroke="#304080" stroke-width="1.6" stroke-dasharray="1.6 .8"/>
<line x1="1" y1="6.5" x2="8.5" y2="6.5" stroke="#207020" stroke-width="1.6" stroke-dasharray="1.6 .8"/>
</g>
<rect x="193.1" y="509.4" width="10.4" height="10.6" fill="#eeece8"/>
<line x1="193.1" y1="509.6" x2="203.5" y2="509.6" stroke="#909088" stroke-width="0.5"/>
<line x1="193.3" y1="509.4" x2="193.3" y2="520" stroke="#909088" stroke-width="0.5"/>
<line x1="203.4" y1="509.4" x2="203.4" y2="520" stroke="#fff" stroke-width="0.5"/>
<g transform="translate(198.3 514.4) scale(.8) translate(-4.8 -5.2)">
<rect x="1.5" y="3.5" width="6.5" height="5" fill="#808040" stroke="#303010" stroke-width="0.7"/>
<line x1="1" y1="2.2" x2="8.6" y2="2.2" stroke="#304080" stroke-width="1.4" stroke-dasharray="1.4 .8"/>
</g>
<rect x="206" y="509.4" width="10.4" height="10.6" fill="#eeece8"/>
<line x1="206" y1="509.6" x2="216.4" y2="509.6" stroke="#909088" stroke-width="0.5"/>
<line x1="206.2" y1="509.4" x2="206.2" y2="520" stroke="#909088" stroke-width="0.5"/>
<line x1="216.3" y1="509.4" x2="216.3" y2="520" stroke="#fff" stroke-width="0.5"/>
<g transform="translate(211.2 514.4) scale(.8) translate(-4.8 -5.2)">
<polygon points="1,8.5 4.5,2.5 8.5,8.5" fill="#d8d8d0" stroke="#707070" stroke-width="0.7"/>
<line x1="4.5" y1="2.5" x2="4.5" y2="8.5" stroke="#c03030" stroke-width="0.7"/>
</g>
<rect x="217.3" y="509.4" width="10.4" height="10.6" fill="#eeece8"/>
<line x1="217.3" y1="509.6" x2="227.7" y2="509.6" stroke="#909088" stroke-width="0.5"/>
<line x1="217.5" y1="509.4" x2="217.5" y2="520" stroke="#909088" stroke-width="0.5"/>
<line x1="227.6" y1="509.4" x2="227.6" y2="520" stroke="#fff" stroke-width="0.5"/>
<g transform="translate(222.5 514.4) scale(.8) translate(-4.8 -5.2)">
<rect x="1.5" y="1.5" width="6.5" height="7.5" fill="#909090" stroke="#202020" stroke-width="0.8"/>
<line x1="4.7" y1="1.5" x2="4.7" y2="9" stroke="#202020" stroke-width="0.7"/>
<line x1="1.5" y1="5" x2="8" y2="5" stroke="#202020" stroke-width="0.7"/>
</g>
<rect x="230.2" y="509.4" width="10.4" height="10.6" fill="#eeece8"/>
<line x1="230.2" y1="509.6" x2="240.6" y2="509.6" stroke="#909088" stroke-width="0.5"/>
<line x1="230.4" y1="509.4" x2="230.4" y2="520" stroke="#909088" stroke-width="0.5"/>
<line x1="240.5" y1="509.4" x2="240.5" y2="520" stroke="#fff" stroke-width="0.5"/>
<g transform="translate(235.4 514.4) scale(.8) translate(-4.8 -5.2)">
<rect x="1" y="2.5" width="6" height="6.5" fill="#4060d0" stroke="#102060" stroke-width="0.8"/>
<rect x="3.5" y="1" width="5.5" height="5" fill="#e8e040" stroke="#404010" stroke-width="0.6"/>
</g>
<g transform="translate(246.7 514.4) scale(.8) translate(-4.8 -5.2)">
<rect x="1.5" y="2" width="6.5" height="7" fill="#e4e1da" stroke="#a8a49c" stroke-width="0.8"/>
<line x1="6" y1="1" x2="3" y2="9" stroke="#a09c94" stroke-width="1"/>
</g>
<g transform="translate(258 514.4) scale(.8) translate(-4.8 -5.2)">
<rect x="1" y="1.5" width="8" height="8" fill="#fff" stroke="#d02020" stroke-width="0.8"/>
<line x1="3.67" y1="1.5" x2="3.67" y2="9.5" stroke="#d02020" stroke-width="0.7"/>
<line x1="1" y1="4.17" x2="9" y2="4.17" stroke="#d02020" stroke-width="0.7"/>
<line x1="6.34" y1="1.5" x2="6.34" y2="9.5" stroke="#d02020" stroke-width="0.7"/>
<line x1="1" y1="6.84" x2="9" y2="6.84" stroke="#d02020" stroke-width="0.7"/>
</g>
<rect x="273.5" y="509.6" width="411.5" height="10.2" fill="#ebe9e4"/>
<rect x="264.2" y="509.6" width="9.6" height="10.2" fill="#d4d0c8"/>
<line x1="264.2" y1="510.1" x2="273.8" y2="510.1" stroke="#ffffff" stroke-width="1"/>
<line x1="264.7" y1="509.6" x2="264.7" y2="519.8" stroke="#ffffff" stroke-width="1"/>
<line x1="264.2" y1="519.3" x2="273.8" y2="519.3" stroke="#808080" stroke-width="1"/>
<line x1="273.3" y1="509.6" x2="273.3" y2="519.8" stroke="#808080" stroke-width="1"/>
<polygon points="269.7,513 269.7,516.6 267.9,514.8" fill="#000"/>
<rect x="388" y="509.6" width="9.6" height="10.2" fill="#d4d0c8"/>
<line x1="388" y1="510.1" x2="397.6" y2="510.1" stroke="#ffffff" stroke-width="1"/>
<line x1="388.5" y1="509.6" x2="388.5" y2="519.8" stroke="#ffffff" stroke-width="1"/>
<line x1="388" y1="519.3" x2="397.6" y2="519.3" stroke="#808080" stroke-width="1"/>
<line x1="397.1" y1="509.6" x2="397.1" y2="519.8" stroke="#808080" stroke-width="1"/>
<rect x="684.8" y="509.6" width="8.6" height="10.2" fill="#d4d0c8"/>
<line x1="684.8" y1="510.1" x2="693.4" y2="510.1" stroke="#ffffff" stroke-width="1"/>
<line x1="685.3" y1="509.6" x2="685.3" y2="519.8" stroke="#ffffff" stroke-width="1"/>
<line x1="684.8" y1="519.3" x2="693.4" y2="519.3" stroke="#808080" stroke-width="1"/>
<line x1="692.9" y1="509.6" x2="692.9" y2="519.8" stroke="#808080" stroke-width="1"/>
<polygon points="688.4,513 688.4,516.6 690.2,514.8" fill="#000"/>
<rect x="694" y="510" width="70.4" height="9.6" fill="url(#gd)" stroke="#1c1c1c" stroke-width="0.8"/>
<rect x="766" y="510" width="70.4" height="9.6" fill="url(#gd)" stroke="#1c1c1c" stroke-width="0.8"/>
<rect x="836.3" y="508.8" width="11.2" height="12.6" fill="#d4d0c8"/>
<rect x="123.8" y="522.6" width="723.6" height="11" fill="#808080"/>
<text x="126" y="531.4" font-size="6.8" fill="#b4b4b4" textLength="32.5" lengthAdjust="spacingAndGlyphs">Befehlszeile</text>
<path d="M829,528.6 v-3 h2.6 v3 M831.2,525.8 v2.8 M827.8,528.7 h5 M830.2,528.8 v2.4" fill="none" stroke="#fff" stroke-width=".8"/>
<line x1="837.6" y1="525.6" x2="842" y2="530.4" stroke="#fff" stroke-width="1.2"/>
<line x1="842" y1="525.6" x2="837.6" y2="530.4" stroke="#fff" stroke-width="1.2"/>
<polygon points="128.5,537.5 128.5,545.1 130.6,543.3 132,545.9 133,545.3 131.8,542.9 134.2,542.7" fill="#e8e6e0" stroke="#a09c94" stroke-width="0.6"/>
<line x1="125.6" y1="535.5" x2="125.6" y2="548" stroke="#fff" stroke-width="0.7"/>
<polygon points="139.5,542.9 148.1,542.9 147.5,545.3 140.1,545.3" fill="#d8d480" stroke="#404010" stroke-width="0.6"/>
<line x1="140.3" y1="541.7" x2="147.3" y2="541.7" stroke="#202020" stroke-width="0.6"/>
<text x="143.8" y="540.9" font-size="4.4" fill="#101040" font-weight="bold" text-anchor="middle">N</text>
<polygon points="150.5,542.9 159.1,542.9 158.5,545.3 151.1,545.3" fill="#d8d480" stroke="#404010" stroke-width="0.6"/>
<line x1="151.3" y1="541.7" x2="158.3" y2="541.7" stroke="#202020" stroke-width="0.6"/>
<text x="154.8" y="540.9" font-size="4.4" fill="#101040" font-weight="bold" text-anchor="middle">Vy</text>
<polygon points="161.5,542.9 170.1,542.9 169.5,545.3 162.1,545.3" fill="#d8d480" stroke="#404010" stroke-width="0.6"/>
<line x1="162.3" y1="541.7" x2="169.3" y2="541.7" stroke="#202020" stroke-width="0.6"/>
<text x="165.8" y="540.9" font-size="4.4" fill="#101040" font-weight="bold" text-anchor="middle">Vz</text>
<path d="M172.7,541.7 q4.1,7.6 8.2,0 z" fill="#d8d480" stroke="#303048" stroke-width=".7"/>
<path d="M172.7,541.7 q4.1,-4.8 8.2,0" fill="#e8e8f0" stroke="#5060a0" stroke-width=".7"/>
<line x1="173.3" y1="541.7" x2="180.3" y2="541.7" stroke="#202020" stroke-width="0.6"/>
<text x="176.8" y="540.9" font-size="4.4" fill="#101040" font-weight="bold" text-anchor="middle">Mx</text>
<path d="M183.7,541.7 q4.1,7.6 8.2,0 z" fill="#d8d480" stroke="#303048" stroke-width=".7"/>
<path d="M183.7,541.7 q4.1,-4.8 8.2,0" fill="#e8e8f0" stroke="#5060a0" stroke-width=".7"/>
<line x1="184.3" y1="541.7" x2="191.3" y2="541.7" stroke="#202020" stroke-width="0.6"/>
<text x="187.8" y="540.9" font-size="4.4" fill="#101040" font-weight="bold" text-anchor="middle">My</text>
<path d="M194.7,541.7 q4.1,7.6 8.2,0 z" fill="#d8d480" stroke="#303048" stroke-width=".7"/>
<path d="M194.7,541.7 q4.1,-4.8 8.2,0" fill="#e8e8f0" stroke="#5060a0" stroke-width=".7"/>
<line x1="195.3" y1="541.7" x2="202.3" y2="541.7" stroke="#202020" stroke-width="0.6"/>
<text x="198.8" y="540.9" font-size="4.4" fill="#101040" font-weight="bold" text-anchor="middle">Mz</text>
<path d="M205.7,541.7 q4.1,7.6 8.2,0 z" fill="#d8d480" stroke="#303048" stroke-width=".7"/>
<path d="M205.7,541.7 q4.1,-4.8 8.2,0" fill="#e8e8f0" stroke="#5060a0" stroke-width=".7"/>
<line x1="206.3" y1="541.7" x2="213.3" y2="541.7" stroke="#202020" stroke-width="0.6"/>
<text x="209.8" y="540.9" font-size="4.4" fill="#101040" font-weight="bold" text-anchor="middle">ux</text>
<path d="M216.7,541.7 q4.1,7.6 8.2,0 z" fill="#d8d480" stroke="#303048" stroke-width=".7"/>
<path d="M216.7,541.7 q4.1,-4.8 8.2,0" fill="#e8e8f0" stroke="#5060a0" stroke-width=".7"/>
<line x1="217.3" y1="541.7" x2="224.3" y2="541.7" stroke="#202020" stroke-width="0.6"/>
<text x="220.8" y="540.9" font-size="4.4" fill="#101040" font-weight="bold" text-anchor="middle">uy</text>
<path d="M227.7,541.7 q4.1,7.6 8.2,0 z" fill="#d8d480" stroke="#303048" stroke-width=".7"/>
<path d="M227.7,541.7 q4.1,-4.8 8.2,0" fill="#e8e8f0" stroke="#5060a0" stroke-width=".7"/>
<line x1="228.3" y1="541.7" x2="235.3" y2="541.7" stroke="#202020" stroke-width="0.6"/>
<text x="231.8" y="540.9" font-size="4.4" fill="#101040" font-weight="bold" text-anchor="middle">uz</text>
<polyline points="238.5,545.5 238.5,539 244,539 244,541.5" fill="none" stroke="#206020" stroke-width="1.1"/>
<line x1="250" y1="544.5" x2="255" y2="539.5" stroke="#c03020" stroke-width="1.1"/>
<line x1="250" y1="545.1" x2="254" y2="545.1" stroke="#404040" stroke-width="0.7"/>
<line x1="264" y1="539.5" x2="268" y2="544.5" stroke="#20a020" stroke-width="1"/>
<line x1="264" y1="545.1" x2="269" y2="545.1" stroke="#c0c020" stroke-width="0.8"/>
<line x1="275.3" y1="538.5" x2="275.3" y2="545.7" stroke="#2030c0" stroke-width="1"/>
<polygon points="273.6,541 275.3,538.1 277,541" fill="#2030c0"/>
<path d="M283,544.5 a3,3 0 1 1 5,-3" fill="none" stroke="#d02020" stroke-width="1"/>
<line x1="285.5" y1="545.5" x2="285.5" y2="540.5" stroke="#2030c0" stroke-width="0.9"/>
<polyline points="294,538.5 297,538.5 299.6,541.5" fill="none" stroke="#20a020" stroke-width="1"/>
<polygon points="295,545.5 297,542 299,545.5" fill="#e8e8e8" stroke="#404040" stroke-width="0.6"/>
<circle cx="309.5" cy="540" r="1.3" fill="none" stroke="#2030a0" stroke-width="0.7"/>
<path d="M306.5,545.1 q3,-5 6,0 z" fill="#e8e8f8" stroke="#2030a0" stroke-width=".7"/>
<rect x="315.9" y="541.5" width="1.6" height="3.8" fill="#2040e0"/>
<rect x="317.46" y="541.5" width="1.6" height="3.8" fill="#20b040"/>
<rect x="319.02" y="541.5" width="1.6" height="3.8" fill="#e8e020"/>
<rect x="320.58" y="541.5" width="1.6" height="3.8" fill="#e03020"/>
<rect x="322.14" y="541.5" width="1.6" height="3.8" fill="#2040e0"/>
<rect x="315.9" y="541.5" width="7.8" height="3.8" fill="none" stroke="#202020" stroke-width="0.5"/>
<rect x="315.9" y="538.1" width="7.8" height="3" fill="#303030"/>
<text x="319.8" y="540.7" font-size="3.2" fill="#fff" text-anchor="middle">σE+</text>
<rect x="326.95" y="541.5" width="1.6" height="3.8" fill="#2040e0"/>
<rect x="328.51" y="541.5" width="1.6" height="3.8" fill="#20b040"/>
<rect x="330.07" y="541.5" width="1.6" height="3.8" fill="#e8e020"/>
<rect x="331.63" y="541.5" width="1.6" height="3.8" fill="#e03020"/>
<rect x="333.19" y="541.5" width="1.6" height="3.8" fill="#2040e0"/>
<rect x="326.95" y="541.5" width="7.8" height="3.8" fill="none" stroke="#202020" stroke-width="0.5"/>
<rect x="326.95" y="538.1" width="7.8" height="3" fill="#303030"/>
<text x="330.85" y="540.7" font-size="3.2" fill="#fff" text-anchor="middle">σE-</text>
<rect x="338" y="541.5" width="1.6" height="3.8" fill="#2040e0"/>
<rect x="339.56" y="541.5" width="1.6" height="3.8" fill="#20b040"/>
<rect x="341.12" y="541.5" width="1.6" height="3.8" fill="#e8e020"/>
<rect x="342.68" y="541.5" width="1.6" height="3.8" fill="#e03020"/>
<rect x="344.24" y="541.5" width="1.6" height="3.8" fill="#2040e0"/>
<rect x="338" y="541.5" width="7.8" height="3.8" fill="none" stroke="#202020" stroke-width="0.5"/>
<rect x="338" y="538.1" width="7.8" height="3" fill="#303030"/>
<text x="341.9" y="540.7" font-size="3.2" fill="#fff" text-anchor="middle">σx</text>
<rect x="349.05" y="541.5" width="1.6" height="3.8" fill="#2040e0"/>
<rect x="350.61" y="541.5" width="1.6" height="3.8" fill="#20b040"/>
<rect x="352.17" y="541.5" width="1.6" height="3.8" fill="#e8e020"/>
<rect x="353.73" y="541.5" width="1.6" height="3.8" fill="#e03020"/>
<rect x="355.29" y="541.5" width="1.6" height="3.8" fill="#2040e0"/>
<rect x="349.05" y="541.5" width="7.8" height="3.8" fill="none" stroke="#202020" stroke-width="0.5"/>
<rect x="349.05" y="538.1" width="7.8" height="3" fill="#303030"/>
<text x="352.95" y="540.7" font-size="3.2" fill="#fff" text-anchor="middle">σy</text>
<rect x="360.1" y="541.5" width="1.6" height="3.8" fill="#2040e0"/>
<rect x="361.66" y="541.5" width="1.6" height="3.8" fill="#20b040"/>
<rect x="363.22" y="541.5" width="1.6" height="3.8" fill="#e8e020"/>
<rect x="364.78" y="541.5" width="1.6" height="3.8" fill="#e03020"/>
<rect x="366.34" y="541.5" width="1.6" height="3.8" fill="#2040e0"/>
<rect x="360.1" y="541.5" width="7.8" height="3.8" fill="none" stroke="#202020" stroke-width="0.5"/>
<rect x="360.1" y="538.1" width="7.8" height="3" fill="#303030"/>
<text x="364" y="540.7" font-size="3.2" fill="#fff" text-anchor="middle">σEP</text>
<line x1="372.5" y1="535.5" x2="372.5" y2="548" stroke="#fff" stroke-width="0.7"/>
<line x1="603.6" y1="535.4" x2="603.6" y2="548.2" stroke="#fff" stroke-width="0.7"/>
<line x1="846.6" y1="535.4" x2="846.6" y2="548.2" stroke="#808080" stroke-width="0.6"/>
<line x1="607.8" y1="538.9" x2="613" y2="544.1" stroke="#b4b0a8" stroke-width="0.9"/>
<line x1="617.4" y1="538.9" x2="622.6" y2="544.1" stroke="#b4b0a8" stroke-width="0.9"/>
<line x1="629.4" y1="538.9" x2="634.6" y2="544.1" stroke="#b4b0a8" stroke-width="0.9"/>
<rect x="631" y="540.5" width="2.4" height="2.4" fill="none" stroke="#b4b0a8" stroke-width="0.6"/>
<line x1="640.4" y1="538.9" x2="645.6" y2="544.1" stroke="#b4b0a8" stroke-width="0.9"/>
<line x1="645.6" y1="538.9" x2="640.4" y2="544.1" stroke="#b4b0a8" stroke-width="0.9"/>
<line x1="650.8" y1="536.5" x2="650.8" y2="546.5" stroke="#909088" stroke-width="0.7"/>
<line x1="651.6" y1="536.5" x2="651.6" y2="546.5" stroke="#fff" stroke-width="0.7"/>
<polyline points="655,543.5 658,539.3 661,542.5" fill="none" stroke="#b4b0a8" stroke-width="0.9"/>
<polyline points="665,543.5 668,539.3 671,542.5" fill="none" stroke="#b4b0a8" stroke-width="0.9"/>
<polyline points="677.7,543.5 680.7,539.3 683.7,542.5" fill="none" stroke="#b4b0a8" stroke-width="0.9"/>
<polyline points="688.8,543.5 691.8,539.3 694.8,542.5" fill="none" stroke="#b4b0a8" stroke-width="0.9"/>
<line x1="699" y1="536.5" x2="699" y2="546.5" stroke="#909088" stroke-width="0.7"/>
<line x1="699.8" y1="536.5" x2="699.8" y2="546.5" stroke="#fff" stroke-width="0.7"/>
<line x1="703" y1="538.5" x2="708.6" y2="544.9" stroke="#2030c0" stroke-width="1.1"/>
<rect x="702" y="537.5" width="2.4" height="2.4" fill="#d03030"/>
<line x1="707" y1="539.5" x2="709.4" y2="539.5" stroke="#2030c0" stroke-width="0.9"/>
<rect x="716" y="538.5" width="6" height="6.4" fill="none" stroke="#303030" stroke-width="0.8" stroke-dasharray=".8 .9"/>
<line x1="716" y1="541.7" x2="722" y2="541.7" stroke="#303030" stroke-width="0.7" stroke-dasharray=".8 .9"/>
<line x1="719" y1="538.5" x2="719" y2="544.9" stroke="#303030" stroke-width="0.7" stroke-dasharray=".8 .9"/>
<line x1="730" y1="538.5" x2="730" y2="544.5" stroke="#2030a0" stroke-width="1"/>
<line x1="726.6" y1="544.7" x2="733.4" y2="544.7" stroke="#2030a0" stroke-width="1"/>
<line x1="726.8" y1="539.3" x2="733.2" y2="539.3" stroke="#c03030" stroke-width="0.8"/>
<line x1="738.3" y1="538.5" x2="744.3" y2="544.7" stroke="#20a020" stroke-width="1.1"/>
<line x1="744.3" y1="538.5" x2="738.3" y2="544.7" stroke="#c03030" stroke-width="1.1"/>
<rect x="747" y="535.7" width="10.7" height="11.4" fill="#f0eeea"/>
<line x1="747" y1="535.9" x2="757.7" y2="535.9" stroke="#808080" stroke-width="0.5"/>
<line x1="747.2" y1="535.7" x2="747.2" y2="547.1" stroke="#808080" stroke-width="0.5"/>
<line x1="749.7" y1="538.7" x2="755.3" y2="544.7" stroke="#303030" stroke-width="0.9"/>
<circle cx="750.1" cy="539.1" r="1.2" fill="#d02020"/>
<rect x="758.2" y="535.7" width="10.7" height="11.4" fill="#f0eeea"/>
<line x1="758.2" y1="535.9" x2="768.9" y2="535.9" stroke="#808080" stroke-width="0.5"/>
<line x1="758.4" y1="535.7" x2="758.4" y2="547.1" stroke="#808080" stroke-width="0.5"/>
<line x1="760.9" y1="538.7" x2="766.5" y2="544.7" stroke="#303030" stroke-width="0.9"/>
<circle cx="761.3" cy="539.1" r="1.2" fill="#d02020"/>
<rect x="769.2" y="535.7" width="10.7" height="11.4" fill="#f0eeea"/>
<line x1="769.2" y1="535.9" x2="779.9" y2="535.9" stroke="#808080" stroke-width="0.5"/>
<line x1="769.4" y1="535.7" x2="769.4" y2="547.1" stroke="#808080" stroke-width="0.5"/>
<line x1="771.9" y1="538.7" x2="777.5" y2="544.7" stroke="#303030" stroke-width="0.9"/>
<circle cx="772.3" cy="539.1" r="1.2" fill="#d02020"/>
<line x1="777.5" y1="538.7" x2="771.9" y2="544.7" stroke="#303030" stroke-width="0.8"/>
<rect x="780.1" y="535.7" width="10.7" height="11.4" fill="#f0eeea"/>
<line x1="780.1" y1="535.9" x2="790.8" y2="535.9" stroke="#808080" stroke-width="0.5"/>
<line x1="780.3" y1="535.7" x2="780.3" y2="547.1" stroke="#808080" stroke-width="0.5"/>
<line x1="782.8" y1="538.7" x2="788.4" y2="544.7" stroke="#303030" stroke-width="0.9"/>
<circle cx="783.2" cy="539.1" r="1.2" fill="#d02020"/>
<polyline points="782,541.5 785.4,544.7 788.8,539.5" fill="none" stroke="#2030c0" stroke-width="0.9"/>
<polyline points="792.1,544.5 794.3,539.5 798.5,538.9" fill="none" stroke="#303030" stroke-width="0.9"/>
<circle cx="792.5" cy="539.5" r="1.1" fill="#d02020"/>
<circle cx="797.9" cy="543.9" r="1.1" fill="#d02020"/>
<polyline points="803.8,544.5 806,539.5 810.2,538.9" fill="none" stroke="#303030" stroke-width="0.9"/>
<circle cx="804.2" cy="539.5" r="1.1" fill="#d02020"/>
<circle cx="809.6" cy="543.9" r="1.1" fill="#d02020"/>
<polyline points="814.2,544.5 816.4,539.5 820.6,538.9" fill="none" stroke="#303030" stroke-width="0.9"/>
<circle cx="814.6" cy="539.5" r="1.1" fill="#d02020"/>
<circle cx="820" cy="543.9" r="1.1" fill="#d02020"/>
<rect x="825.4" y="540.1" width="7.4" height="4.6" fill="#e0c040" stroke="#504010" stroke-width="0.7"/>
<line x1="825.8" y1="538.9" x2="832.4" y2="538.9" stroke="#404040" stroke-width="0.8"/>
<rect x="838" y="538.5" width="6.4" height="6.6" fill="#f4f0d0" stroke="#a08020" stroke-width="0.8"/>
<circle cx="838.2" cy="538.7" r="0.9" fill="#d02020"/>
<rect x="127.4" y="549.6" width="720.2" height="12" fill="#fff"/>
<line x1="127.4" y1="550.1" x2="847.6" y2="550.1" stroke="#808080" stroke-width="1"/>
<line x1="127.9" y1="549.6" x2="127.9" y2="561.6" stroke="#808080" stroke-width="1"/>
<line x1="127.4" y1="561.1" x2="847.6" y2="561.1" stroke="#ffffff" stroke-width="1"/>
<line x1="847.1" y1="549.6" x2="847.1" y2="561.6" stroke="#ffffff" stroke-width="1"/>
<line x1="127.9" y1="550.5" x2="127.9" y2="561.4" stroke="#404040" stroke-width="0.8"/>
<line x1="127.4" y1="550.4" x2="847" y2="550.4" stroke="#404040" stroke-width="0.7"/>
<text x="130.3" y="558.6" font-size="6.8" fill="#000" textLength="24" lengthAdjust="spacingAndGlyphs">Befehl &gt;</text>
<rect x="0" y="563.2" width="960" height="12.8" fill="#d4d0c8"/>
<line x1="1" y1="564.6" x2="64" y2="564.6" stroke="#808080" stroke-width="0.6"/>
<line x1="1" y1="564.3" x2="1" y2="575.4" stroke="#808080" stroke-width="0.6"/>
<line x1="1" y1="575.3" x2="64" y2="575.3" stroke="#fff" stroke-width="0.7"/>
<line x1="64" y1="564.6" x2="64" y2="575.4" stroke="#fff" stroke-width="0.7"/>
<line x1="65.5" y1="564.6" x2="128.5" y2="564.6" stroke="#808080" stroke-width="0.6"/>
<line x1="65.5" y1="564.3" x2="65.5" y2="575.4" stroke="#808080" stroke-width="0.6"/>
<line x1="65.5" y1="575.3" x2="128.5" y2="575.3" stroke="#fff" stroke-width="0.7"/>
<line x1="128.5" y1="564.6" x2="128.5" y2="575.4" stroke="#fff" stroke-width="0.7"/>
<line x1="130" y1="564.6" x2="148.5" y2="564.6" stroke="#808080" stroke-width="0.6"/>
<line x1="130" y1="564.3" x2="130" y2="575.4" stroke="#808080" stroke-width="0.6"/>
<line x1="130" y1="575.3" x2="148.5" y2="575.3" stroke="#fff" stroke-width="0.7"/>
<line x1="148.5" y1="564.6" x2="148.5" y2="575.4" stroke="#fff" stroke-width="0.7"/>
<line x1="150" y1="564.6" x2="184" y2="564.6" stroke="#808080" stroke-width="0.6"/>
<line x1="150" y1="564.3" x2="150" y2="575.4" stroke="#808080" stroke-width="0.6"/>
<line x1="150" y1="575.3" x2="184" y2="575.3" stroke="#fff" stroke-width="0.7"/>
<line x1="184" y1="564.6" x2="184" y2="575.4" stroke="#fff" stroke-width="0.7"/>
<line x1="185.5" y1="564.6" x2="808" y2="564.6" stroke="#808080" stroke-width="0.6"/>
<line x1="185.5" y1="564.3" x2="185.5" y2="575.4" stroke="#808080" stroke-width="0.6"/>
<line x1="185.5" y1="575.3" x2="808" y2="575.3" stroke="#fff" stroke-width="0.7"/>
<line x1="808" y1="564.6" x2="808" y2="575.4" stroke="#fff" stroke-width="0.7"/>
<line x1="810" y1="564.6" x2="851.8" y2="564.6" stroke="#808080" stroke-width="0.6"/>
<line x1="810" y1="564.3" x2="810" y2="575.4" stroke="#808080" stroke-width="0.6"/>
<line x1="810" y1="575.3" x2="851.8" y2="575.3" stroke="#fff" stroke-width="0.7"/>
<line x1="851.8" y1="564.6" x2="851.8" y2="575.4" stroke="#fff" stroke-width="0.7"/>
<line x1="853" y1="564.6" x2="899" y2="564.6" stroke="#808080" stroke-width="0.6"/>
<line x1="853" y1="564.3" x2="853" y2="575.4" stroke="#808080" stroke-width="0.6"/>
<line x1="853" y1="575.3" x2="899" y2="575.3" stroke="#fff" stroke-width="0.7"/>
<line x1="899" y1="564.6" x2="899" y2="575.4" stroke="#fff" stroke-width="0.7"/>
<line x1="900.5" y1="564.6" x2="959" y2="564.6" stroke="#808080" stroke-width="0.6"/>
<line x1="900.5" y1="564.3" x2="900.5" y2="575.4" stroke="#808080" stroke-width="0.6"/>
<line x1="900.5" y1="575.3" x2="959" y2="575.3" stroke="#fff" stroke-width="0.7"/>
<line x1="959" y1="564.6" x2="959" y2="575.4" stroke="#fff" stroke-width="0.7"/>
<text x="136" y="572.6" font-size="6.8" fill="#000">m</text>
<text x="155.8" y="572.6" font-size="6.8" fill="#000" textLength="28.5" lengthAdjust="spacingAndGlyphs">Ebene XY</text>
<text x="188.8" y="572.6" font-size="6.8" fill="#000" textLength="17.5" lengthAdjust="spacingAndGlyphs">Bereit</text>
<text x="816.2" y="572.6" font-size="6.8" fill="#000" textLength="35" lengthAdjust="spacingAndGlyphs">Fangmodus</text>
<text x="858" y="572.6" font-size="6.8" fill="#000" textLength="26" lengthAdjust="spacingAndGlyphs">Filter aus</text>
<text x="905.5" y="572.6" font-size="6.8" fill="#000" textLength="32.5" lengthAdjust="spacingAndGlyphs">Aktuelles B</text>
<rect x="940.3" y="567.2" width="8" height="6.2" fill="#1010f0"/>
<rect x="951" y="567" width="8" height="2.2" fill="#101010"/>
<rect x="951" y="569.2" width="8" height="2.2" fill="#e01010"/>
<rect x="951" y="571.4" width="8" height="2.2" fill="#f0c010"/>
<rect x="220" y="57.8" width="46.8" height="78.4" fill="#d4d0c8"/>
<line x1="220.3" y1="57.8" x2="220.3" y2="136.2" stroke="#fff" stroke-width="0.7"/>
<line x1="220" y1="58.1" x2="266.8" y2="58.1" stroke="#fff" stroke-width="0.7"/>
<line x1="266.6" y1="57.8" x2="266.6" y2="136.2" stroke="#404040" stroke-width="0.8"/>
<line x1="220" y1="136" x2="266.8" y2="136" stroke="#404040" stroke-width="0.8"/>
<line x1="265.8" y1="58.6" x2="265.8" y2="135.4" stroke="#808080" stroke-width="0.6"/>
<line x1="220.8" y1="135.3" x2="266" y2="135.3" stroke="#808080" stroke-width="0.6"/>
<rect x="221.2" y="59.4" width="44.4" height="9" fill="#0a246a"/>
<text x="222.6" y="66.6" font-size="6.9" fill="#fff" textLength="23" lengthAdjust="spacingAndGlyphs" font-weight="bold">Ansicht</text>
<polygon points="249,63.1 253.4,63.1 251.2,65.3" fill="#fff"/>
<line x1="258.6" y1="61.6" x2="263" y2="66.4" stroke="#fff" stroke-width="1.3"/>
<line x1="263" y1="61.6" x2="258.6" y2="66.4" stroke="#fff" stroke-width="1.3"/>
<ellipse cx="226.9" cy="77" rx="3.4" ry="2.2" fill="#20a8a0" stroke="#104040" stroke-width=".6"/>
<line x1="225.3" y1="72" x2="227.1" y2="76" stroke="#c02020" stroke-width="0.9"/>
<line x1="228.5" y1="72" x2="226.9" y2="76" stroke="#2030c0" stroke-width="0.9"/>
<ellipse cx="237.8" cy="77" rx="3.4" ry="2.2" fill="#20a8a0" stroke="#104040" stroke-width=".6"/>
<line x1="236.2" y1="72" x2="238" y2="76" stroke="#c02020" stroke-width="0.9"/>
<line x1="239.4" y1="72" x2="237.8" y2="76" stroke="#2030c0" stroke-width="0.9"/>
<ellipse cx="248.8" cy="77" rx="3.4" ry="2.2" fill="#20a8a0" stroke="#104040" stroke-width=".6"/>
<line x1="247.2" y1="72" x2="249" y2="76" stroke="#c02020" stroke-width="0.9"/>
<line x1="250.4" y1="72" x2="248.8" y2="76" stroke="#2030c0" stroke-width="0.9"/>
<ellipse cx="259.8" cy="77" rx="3.4" ry="2.2" fill="#20a8a0" stroke="#104040" stroke-width=".6"/>
<line x1="258.2" y1="72" x2="260" y2="76" stroke="#c02020" stroke-width="0.9"/>
<line x1="261.4" y1="72" x2="259.8" y2="76" stroke="#2030c0" stroke-width="0.9"/>
<line x1="226.4" y1="91.7" x2="226.4" y2="84.7" stroke="#2030c0" stroke-width="1"/>
<circle cx="226.4" cy="86.7" r="1.2" fill="#2030c0"/>
<line x1="227.4" y1="89.2" x2="230.4" y2="89.2" stroke="#d02020" stroke-width="1"/>
<circle cx="237.2" cy="87.4" r="2.6" fill="#e8f8f8" stroke="#106060" stroke-width="0.9"/>
<line x1="239.2" y1="89.6" x2="241.6" y2="92.2" stroke="#101010" stroke-width="1.3"/>
<circle cx="248.2" cy="87.4" r="2.6" fill="#e8f8f8" stroke="#106060" stroke-width="0.9"/>
<line x1="250.2" y1="89.6" x2="252.6" y2="92.2" stroke="#101010" stroke-width="1.3"/>
<circle cx="259.2" cy="87.4" r="2.6" fill="#e8f8f8" stroke="#106060" stroke-width="0.9"/>
<line x1="261.2" y1="89.6" x2="263.6" y2="92.2" stroke="#101010" stroke-width="1.3"/>
<circle cx="226.3" cy="100.6" r="2.6" fill="#e8f8f8" stroke="#106060" stroke-width="0.9"/>
<line x1="228.3" y1="102.8" x2="230.7" y2="105.4" stroke="#101010" stroke-width="1.3"/>
<circle cx="237.2" cy="100.6" r="2.6" fill="#e4e1da" stroke="#a8a49c" stroke-width="0.9"/>
<line x1="239.2" y1="102.8" x2="241.6" y2="105.4" stroke="#a8a49c" stroke-width="1.2"/>
<polygon points="245.8,100.4 249.8,100.4 249.8,104.8 245.8,104.8" fill="#e0d840" stroke="#303010" stroke-width="0.7"/>
<polygon points="245.8,100.4 247.8,98.4 251.8,98.4 249.8,100.4" fill="#f4f090" stroke="#303010" stroke-width="0.6"/>
<polygon points="249.8,100.4 251.8,98.4 251.8,102.8 249.8,104.8" fill="#908820" stroke="#303010" stroke-width="0.6"/>
<circle cx="259.8" cy="100.4" r="2" fill="#f4e830" stroke="#505010" stroke-width="0.6"/>
<rect x="258.8" y="102.4" width="2" height="2.4" fill="#2030a0"/>
<line x1="222" y1="107.8" x2="265" y2="107.8" stroke="#a09c94" stroke-width="0.6"/>
<line x1="222" y1="108.4" x2="265" y2="108.4" stroke="#fff" stroke-width="0.5"/>
<rect x="223.4" y="113.4" width="6.5" height="5.4" fill="#fff" stroke="#202060" stroke-width="0.8"/>
<rect x="223.4" y="113.4" width="6.5" height="1.6" fill="#d02020"/>
<rect x="225.9" y="111.4" width="4.5" height="2.6" fill="#3040a0"/>
<rect x="234.7" y="113.4" width="6.5" height="5.4" fill="#e8e6e0" stroke="#a8a49c" stroke-width="0.8"/>
<rect x="237.2" y="111.4" width="4.5" height="2.6" fill="#c0bcb4"/>
<line x1="244.5" y1="110.5" x2="244.5" y2="120.5" stroke="#a09c94" stroke-width="0.6"/>
<rect x="249" y="111.6" width="6.8" height="6.8" fill="#e8e040" stroke="#606010" stroke-width="0.8"/>
<rect x="250.8" y="113.4" width="3.8" height="3.2" fill="#fff" stroke="#404010" stroke-width="0.6"/>
<polygon points="223.5,127.6 228.1,127.6 228.1,132.6 223.5,132.6" fill="#fff" stroke="#2030a0" stroke-width="0.8"/>
<polygon points="223.5,127.6 225.5,125.6 230.3,125.6 228.1,127.6" fill="#5060d0" stroke="#2030a0" stroke-width="0.6"/>
<polygon points="228.1,127.6 230.3,125.6 230.3,130.6 228.1,132.6" fill="#2030a0"/>
<line x1="224.5" y1="131.6" x2="226.9" y2="128.6" stroke="#2030a0" stroke-width="0.9"/>
</g>
</svg></body></html>
